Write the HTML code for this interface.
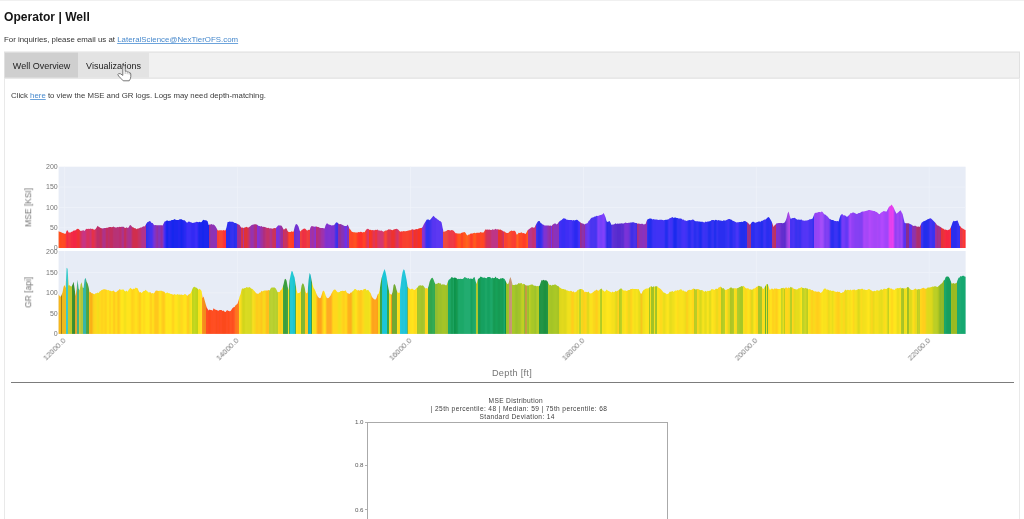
<!DOCTYPE html>
<html><head><meta charset="utf-8"><title>Operator | Well</title>
<style>
html,body{margin:0;padding:0;background:#fff;}
html{width:1024px;height:519px;overflow:hidden;}
body{width:1024px;height:519px;overflow:hidden;position:relative;font-family:"Liberation Sans",sans-serif;color:#222;}
.topline{position:absolute;left:0;top:0;width:1024px;height:1px;background:#f0f0f0;}
h1{position:absolute;left:4px;top:10px;margin:0;font-size:12.1px;line-height:14px;font-weight:bold;color:#151515;white-space:nowrap;}
.inq{position:absolute;left:4px;top:34.7px;font-size:7.87px;line-height:10px;color:#333;white-space:nowrap;}
a{color:#4688cc;text-decoration:underline;text-decoration-thickness:0.7px;text-decoration-color:#6da4dc;text-underline-offset:1px;}
.inq a{letter-spacing:0.02px;}
.tabbar{position:absolute;left:4px;top:52px;width:1016px;height:27px;background:#f1f1f1;border:1px solid #e0e0e0;box-sizing:border-box;transform:translateY(-0.4px);}
.tab{position:absolute;top:0;height:25px;font-size:9px;line-height:27px;color:#222;text-align:center;white-space:nowrap;}
.tab.t1{left:0;width:73px;background:#cfcfcf;}
.tab.t2{left:73px;width:71px;background:#e3e3e3;}
.panel{position:absolute;left:4px;top:78px;width:1016px;height:441px;border:1px solid #e9e9e9;border-top:none;border-bottom:none;box-sizing:border-box;}
.click{position:absolute;left:11px;top:91px;font-size:7.82px;line-height:10px;color:#3a3a3a;white-space:nowrap;}
.chart{position:absolute;left:0;top:0;font-family:"Liberation Sans",sans-serif;}
.hr{position:absolute;left:11px;top:381.6px;width:1003px;height:1.2px;background:#7c7c7c;}
.mt{position:absolute;left:317px;width:400px;text-align:center;font-size:6.6px;line-height:8px;color:#404040;white-space:nowrap;letter-spacing:0.25px;}
.box{position:absolute;left:367px;top:422px;width:301px;height:97px;border:1px solid #aaaaaa;border-bottom:none;box-sizing:border-box;}
.yt{position:absolute;left:340px;width:23.2px;text-align:right;font-size:6.2px;line-height:6px;color:#585858;letter-spacing:-0.15px;}
.tick{position:absolute;left:365px;width:2px;height:1px;background:#b0b0b0;}
h1,.inq,.tab,.click,.mt,.yt,.chart text{filter:blur(0.35px);}
.cursor{position:absolute;left:116.2px;top:65.2px;filter:blur(0.3px);}
</style></head><body>
<div class="topline"></div>
<h1>Operator | Well</h1>
<div class="inq">For inquiries, please email us at <a>LateralScience@NexTierOFS.com</a></div>
<div class="tabbar"><div class="tab t1">Well Overview</div><div class="tab t2">Visualizations</div></div>
<div class="panel"></div>
<div class="click">Click <a>here</a> to view the MSE and GR logs. Logs may need depth-matching.</div>
<svg class="chart" width="1024" height="400" viewBox="0 0 1024 400">
<defs><filter id="bl"><feGaussianBlur stdDeviation="0.45"/></filter></defs>
<g filter="url(#bl)">
<rect x="58.6" y="166.7" width="907.0" height="81.4" fill="#e7ecf6"/>
<line x1="58.6" x2="965.6" y1="227.8" y2="227.8" stroke="#eff3f9" stroke-width="0.75"/>
<line x1="58.6" x2="965.6" y1="207.4" y2="207.4" stroke="#eff3f9" stroke-width="0.75"/>
<line x1="58.6" x2="965.6" y1="187.1" y2="187.1" stroke="#eff3f9" stroke-width="0.75"/>
<line x1="64.7" x2="64.7" y1="166.7" y2="248.1" stroke="#eff3f9" stroke-width="0.75"/>
<line x1="237.6" x2="237.6" y1="166.7" y2="248.1" stroke="#eff3f9" stroke-width="0.75"/>
<line x1="410.5" x2="410.5" y1="166.7" y2="248.1" stroke="#eff3f9" stroke-width="0.75"/>
<line x1="583.4" x2="583.4" y1="166.7" y2="248.1" stroke="#eff3f9" stroke-width="0.75"/>
<line x1="756.3" x2="756.3" y1="166.7" y2="248.1" stroke="#eff3f9" stroke-width="0.75"/>
<line x1="929.2" x2="929.2" y1="166.7" y2="248.1" stroke="#eff3f9" stroke-width="0.75"/>
<rect x="58.6" y="251.0" width="907.0" height="82.9" fill="#e7ecf6"/>
<line x1="58.6" x2="965.6" y1="313.4" y2="313.4" stroke="#eff3f9" stroke-width="0.75"/>
<line x1="58.6" x2="965.6" y1="292.9" y2="292.9" stroke="#eff3f9" stroke-width="0.75"/>
<line x1="58.6" x2="965.6" y1="272.4" y2="272.4" stroke="#eff3f9" stroke-width="0.75"/>
<line x1="64.7" x2="64.7" y1="251.0" y2="333.9" stroke="#eff3f9" stroke-width="0.75"/>
<line x1="237.6" x2="237.6" y1="251.0" y2="333.9" stroke="#eff3f9" stroke-width="0.75"/>
<line x1="410.5" x2="410.5" y1="251.0" y2="333.9" stroke="#eff3f9" stroke-width="0.75"/>
<line x1="583.4" x2="583.4" y1="251.0" y2="333.9" stroke="#eff3f9" stroke-width="0.75"/>
<line x1="756.3" x2="756.3" y1="251.0" y2="333.9" stroke="#eff3f9" stroke-width="0.75"/>
<line x1="929.2" x2="929.2" y1="251.0" y2="333.9" stroke="#eff3f9" stroke-width="0.75"/>
<clipPath id="cm"><polygon points="58.6,248.1 58.6,231.2 59.6,231.7 60.6,231.9 61.6,232.5 62.6,233.0 63.6,233.2 64.6,233.8 65.6,233.8 66.6,230.8 67.6,230.2 68.6,232.4 69.6,232.4 70.6,232.4 71.6,231.8 72.6,231.5 73.6,230.5 74.6,230.5 75.6,230.2 76.6,229.2 77.6,228.8 78.6,228.9 79.6,230.0 80.6,230.9 81.6,230.8 82.6,230.5 83.6,230.3 84.6,231.0 85.6,229.6 86.6,228.8 87.6,228.9 88.6,228.8 89.6,229.0 90.6,228.6 91.6,229.0 92.6,228.7 93.6,229.5 94.6,229.8 95.6,229.1 96.6,227.4 97.6,225.8 98.6,226.8 99.6,227.2 100.6,228.1 101.6,228.3 102.6,228.4 103.6,228.2 104.6,228.1 105.6,228.1 106.6,227.8 107.6,227.7 108.6,227.2 109.6,227.1 110.6,226.9 111.6,227.2 112.6,227.0 113.6,226.6 114.6,227.3 115.6,227.5 116.6,227.5 117.6,227.1 118.6,227.2 119.6,226.7 120.6,227.1 121.6,226.8 122.6,226.8 123.6,226.8 124.6,227.8 125.6,228.1 126.6,227.3 127.6,227.9 128.6,227.5 129.6,225.5 130.6,225.0 131.6,226.3 132.6,227.3 133.6,227.4 134.6,228.3 135.6,228.3 136.6,229.2 137.6,228.4 138.6,228.4 139.6,228.1 140.6,227.4 141.6,227.6 142.6,226.7 143.6,226.2 144.6,226.4 145.6,225.0 146.6,223.2 147.6,222.0 148.6,221.8 149.6,221.0 150.6,221.6 151.6,222.9 152.6,223.1 153.6,224.5 154.6,225.2 155.6,225.1 156.6,225.2 157.6,225.2 158.6,225.3 159.6,225.3 160.6,225.3 161.6,225.3 162.6,225.6 163.6,223.6 164.6,221.6 165.6,221.2 166.6,220.5 167.6,220.5 168.6,221.1 169.6,220.7 170.6,220.8 171.6,219.9 172.6,219.9 173.6,219.7 174.6,218.9 175.6,219.8 176.6,220.1 177.6,219.9 178.6,219.9 179.6,219.3 180.6,219.2 181.6,219.2 182.6,219.9 183.6,220.3 184.6,220.2 185.6,221.2 186.6,222.4 187.6,222.4 188.6,221.6 189.6,221.8 190.6,222.3 191.6,222.5 192.6,222.9 193.6,222.8 194.6,222.4 195.6,222.2 196.6,221.8 197.6,221.9 198.6,222.3 199.6,221.8 200.6,222.3 201.6,221.9 202.6,220.6 203.6,219.7 204.6,220.3 205.6,220.2 206.6,220.6 207.6,221.2 208.6,224.9 209.6,224.6 210.6,224.4 211.6,224.1 212.6,224.7 213.6,224.6 214.6,225.2 215.6,226.4 216.6,228.3 217.6,230.2 218.6,230.6 219.6,230.3 220.6,230.2 221.6,230.2 222.6,230.6 223.6,230.1 224.6,230.4 225.6,230.2 226.6,227.1 227.6,221.9 228.6,222.0 229.6,221.5 230.6,221.8 231.6,221.7 232.6,221.8 233.6,222.3 234.6,223.1 235.6,223.0 236.6,223.5 237.6,224.0 238.6,224.5 239.6,225.0 240.6,226.8 241.6,227.7 242.6,227.4 243.6,227.9 244.6,227.5 245.6,227.2 246.6,226.8 247.6,227.4 248.6,227.4 249.6,226.8 250.6,226.1 251.6,225.1 252.6,224.8 253.6,224.5 254.6,224.2 255.6,224.2 256.6,224.6 257.6,225.0 258.6,225.9 259.6,226.0 260.6,226.6 261.6,226.0 262.6,226.9 263.6,226.8 264.6,227.1 265.6,227.3 266.6,227.8 267.6,228.0 268.6,227.8 269.6,228.6 270.6,228.2 271.6,228.5 272.6,228.7 273.6,228.3 274.6,228.0 275.6,228.2 276.6,227.2 277.6,226.1 278.6,225.2 279.6,225.6 280.6,225.4 281.6,225.8 282.6,227.4 283.6,229.6 284.6,229.2 285.6,228.3 286.6,228.4 287.6,231.0 288.6,232.0 289.6,231.9 290.6,231.9 291.6,231.2 292.6,231.8 293.6,231.5 294.6,227.3 295.6,224.5 296.6,223.9 297.6,225.0 298.6,226.8 299.6,230.4 300.6,231.4 301.6,230.1 302.6,229.4 303.6,228.8 304.6,228.6 305.6,229.0 306.6,230.2 307.6,230.4 308.6,229.7 309.6,230.1 310.6,227.3 311.6,226.1 312.6,226.2 313.6,226.6 314.6,226.7 315.6,226.6 316.6,226.6 317.6,227.0 318.6,227.1 319.6,227.7 320.6,228.0 321.6,228.0 322.6,227.9 323.6,228.2 324.6,228.6 325.6,225.3 326.6,223.6 327.6,223.5 328.6,224.4 329.6,224.7 330.6,225.1 331.6,225.5 332.6,225.3 333.6,225.2 334.6,224.5 335.6,222.9 336.6,222.3 337.6,222.8 338.6,223.7 339.6,224.2 340.6,224.0 341.6,224.6 342.6,224.9 343.6,225.6 344.6,226.0 345.6,225.9 346.6,226.0 347.6,224.5 348.6,226.6 349.6,229.1 350.6,229.8 351.6,231.5 352.6,231.9 353.6,232.2 354.6,232.3 355.6,232.4 356.6,232.6 357.6,232.4 358.6,231.9 359.6,232.2 360.6,231.7 361.6,231.9 362.6,232.6 363.6,232.1 364.6,232.2 365.6,230.6 366.6,229.3 367.6,228.7 368.6,229.0 369.6,230.0 370.6,229.7 371.6,230.3 372.6,230.1 373.6,230.2 374.6,230.2 375.6,229.8 376.6,230.0 377.6,229.5 378.6,230.4 379.6,230.4 380.6,230.8 381.6,230.5 382.6,231.3 383.6,231.7 384.6,230.9 385.6,230.6 386.6,230.4 387.6,230.1 388.6,229.3 389.6,229.4 390.6,229.6 391.6,230.1 392.6,230.2 393.6,229.6 394.6,229.3 395.6,229.0 396.6,228.7 397.6,229.2 398.6,229.9 399.6,231.2 400.6,231.8 401.6,231.3 402.6,231.5 403.6,230.9 404.6,231.3 405.6,231.3 406.6,231.0 407.6,230.7 408.6,230.4 409.6,230.3 410.6,230.3 411.6,229.4 412.6,229.2 413.6,229.7 414.6,229.8 415.6,229.3 416.6,229.1 417.6,229.3 418.6,228.5 419.6,228.2 420.6,227.9 421.6,227.9 422.6,226.9 423.6,224.7 424.6,223.0 425.6,221.4 426.6,219.8 427.6,219.6 428.6,219.6 429.6,220.2 430.6,219.3 431.6,217.9 432.6,216.8 433.6,215.7 434.6,217.1 435.6,218.0 436.6,218.6 437.6,219.4 438.6,220.0 439.6,221.1 440.6,221.2 441.6,222.6 442.6,227.8 443.6,232.0 444.6,231.4 445.6,231.3 446.6,230.8 447.6,230.1 448.6,230.1 449.6,230.3 450.6,230.4 451.6,230.0 452.6,230.3 453.6,230.8 454.6,232.1 455.6,233.3 456.6,233.2 457.6,233.6 458.6,233.4 459.6,233.6 460.6,233.4 461.6,232.7 462.6,232.4 463.6,232.2 464.6,231.9 465.6,233.0 466.6,234.8 467.6,235.5 468.6,234.5 469.6,234.6 470.6,233.6 471.6,233.5 472.6,233.6 473.6,232.9 474.6,232.8 475.6,233.3 476.6,232.7 477.6,232.7 478.6,232.7 479.6,232.7 480.6,232.1 481.6,232.4 482.6,232.4 483.6,232.4 484.6,230.7 485.6,229.3 486.6,229.7 487.6,229.4 488.6,229.7 489.6,229.6 490.6,229.9 491.6,230.0 492.6,229.2 493.6,229.7 494.6,229.5 495.6,228.8 496.6,229.6 497.6,229.2 498.6,229.6 499.6,229.7 500.6,229.5 501.6,230.3 502.6,230.8 503.6,231.5 504.6,231.5 505.6,232.4 506.6,232.9 507.6,233.0 508.6,232.7 509.6,231.5 510.6,231.0 511.6,230.5 512.6,230.9 513.6,230.8 514.6,230.7 515.6,231.8 516.6,234.4 517.6,234.3 518.6,232.7 519.6,233.0 520.6,232.8 521.6,232.3 522.6,233.3 523.6,232.9 524.6,233.5 525.6,234.1 526.6,232.3 527.6,230.2 528.6,229.6 529.6,228.8 530.6,228.0 531.6,227.3 532.6,227.2 533.6,227.7 534.6,227.5 535.6,225.3 536.6,223.4 537.6,221.8 538.6,221.0 539.6,220.9 540.6,222.9 541.6,223.6 542.6,224.6 543.6,224.7 544.6,225.6 545.6,225.5 546.6,225.4 547.6,225.5 548.6,225.6 549.6,225.8 550.6,225.5 551.6,225.9 552.6,224.7 553.6,223.9 554.6,223.4 555.6,223.6 556.6,224.4 557.6,223.8 558.6,222.3 559.6,221.3 560.6,220.5 561.6,219.9 562.6,219.1 563.6,218.2 564.6,218.5 565.6,218.8 566.6,219.8 567.6,219.7 568.6,220.0 569.6,220.1 570.6,219.9 571.6,220.0 572.6,220.5 573.6,219.9 574.6,220.6 575.6,220.1 576.6,219.8 577.6,220.1 578.6,221.0 579.6,221.8 580.6,222.5 581.6,223.3 582.6,223.5 583.6,223.7 584.6,224.4 585.6,223.8 586.6,223.5 587.6,222.9 588.6,221.0 589.6,220.3 590.6,218.8 591.6,217.8 592.6,217.5 593.6,217.2 594.6,216.6 595.6,216.6 596.6,215.8 597.6,215.9 598.6,215.7 599.6,215.2 600.6,215.0 601.6,214.8 602.6,214.2 603.6,212.9 604.6,214.9 605.6,217.6 606.6,221.2 607.6,221.9 608.6,221.4 609.6,221.0 610.6,223.0 611.6,225.1 612.6,224.4 613.6,224.6 614.6,224.1 615.6,223.3 616.6,223.9 617.6,223.6 618.6,223.8 619.6,223.6 620.6,223.6 621.6,223.2 622.6,223.5 623.6,223.4 624.6,223.1 625.6,222.6 626.6,223.1 627.6,222.9 628.6,222.7 629.6,222.8 630.6,222.4 631.6,222.4 632.6,222.2 633.6,222.3 634.6,222.7 635.6,222.9 636.6,223.1 637.6,223.7 638.6,223.5 639.6,223.7 640.6,224.1 641.6,223.8 642.6,223.7 643.6,224.4 644.6,224.3 645.6,224.1 646.6,221.1 647.6,219.3 648.6,219.1 649.6,218.5 650.6,218.5 651.6,218.8 652.6,219.5 653.6,219.1 654.6,219.5 655.6,219.4 656.6,219.6 657.6,219.7 658.6,219.9 659.6,219.7 660.6,219.7 661.6,219.8 662.6,219.9 663.6,220.2 664.6,219.9 665.6,219.7 666.6,219.8 667.6,219.4 668.6,219.3 669.6,218.3 670.6,218.0 671.6,217.5 672.6,217.1 673.6,218.0 674.6,217.5 675.6,217.6 676.6,218.1 677.6,218.0 678.6,218.6 679.6,218.6 680.6,218.6 681.6,218.8 682.6,219.7 683.6,219.6 684.6,220.4 685.6,220.4 686.6,221.1 687.6,220.4 688.6,220.2 689.6,220.0 690.6,220.3 691.6,220.0 692.6,219.6 693.6,219.8 694.6,220.7 695.6,221.3 696.6,221.3 697.6,221.2 698.6,221.5 699.6,221.6 700.6,221.8 701.6,221.7 702.6,221.8 703.6,222.3 704.6,222.4 705.6,221.5 706.6,222.0 707.6,221.4 708.6,221.5 709.6,221.3 710.6,221.1 711.6,220.1 712.6,220.1 713.6,220.1 714.6,220.4 715.6,219.7 716.6,220.0 717.6,220.6 718.6,220.1 719.6,220.4 720.6,220.4 721.6,220.8 722.6,221.0 723.6,220.2 724.6,220.6 725.6,220.5 726.6,220.1 727.6,219.4 728.6,219.1 729.6,219.0 730.6,219.5 731.6,219.7 732.6,220.8 733.6,221.1 734.6,221.5 735.6,222.0 736.6,222.4 737.6,222.3 738.6,222.3 739.6,222.0 740.6,222.0 741.6,221.7 742.6,222.1 743.6,221.3 744.6,221.1 745.6,221.3 746.6,222.0 747.6,222.4 748.6,223.4 749.6,224.7 750.6,224.1 751.6,222.5 752.6,221.8 753.6,221.8 754.6,222.5 755.6,222.7 756.6,222.3 757.6,222.1 758.6,221.6 759.6,221.6 760.6,221.8 761.6,220.7 762.6,220.7 763.6,219.9 764.6,219.4 765.6,219.5 766.6,218.5 767.6,217.6 768.6,217.0 769.6,218.0 770.6,219.7 771.6,221.4 772.6,224.1 773.6,227.1 774.6,225.3 775.6,224.4 776.6,223.2 777.6,223.3 778.6,223.1 779.6,223.1 780.6,223.1 781.6,223.0 782.6,223.2 783.6,223.0 784.6,222.5 785.6,220.7 786.6,218.1 787.6,213.6 788.6,211.5 789.6,215.2 790.6,218.8 791.6,218.6 792.6,217.9 793.6,217.9 794.6,217.8 795.6,218.5 796.6,219.3 797.6,219.7 798.6,219.4 799.6,219.7 800.6,219.7 801.6,219.6 802.6,220.4 803.6,220.4 804.6,220.8 805.6,220.4 806.6,220.5 807.6,220.2 808.6,220.1 809.6,219.2 810.6,219.2 811.6,219.0 812.6,218.4 813.6,216.0 814.6,213.3 815.6,212.8 816.6,212.8 817.6,212.6 818.6,212.0 819.6,212.0 820.6,212.3 821.6,211.5 822.6,211.9 823.6,213.5 824.6,214.4 825.6,214.7 826.6,215.7 827.6,216.4 828.6,217.8 829.6,219.1 830.6,219.3 831.6,219.9 832.6,219.9 833.6,220.2 834.6,220.9 835.6,221.0 836.6,221.3 837.6,221.1 838.6,221.5 839.6,218.0 840.6,215.2 841.6,214.2 842.6,214.3 843.6,215.5 844.6,215.3 845.6,215.7 846.6,216.8 847.6,216.6 848.6,215.6 849.6,214.5 850.6,213.0 851.6,213.3 852.6,212.5 853.6,212.6 854.6,212.9 855.6,213.6 856.6,214.0 857.6,213.7 858.6,213.1 859.6,212.9 860.6,212.5 861.6,211.8 862.6,211.4 863.6,211.6 864.6,211.2 865.6,211.1 866.6,210.8 867.6,210.4 868.6,210.0 869.6,209.9 870.6,210.2 871.6,210.5 872.6,210.8 873.6,211.0 874.6,211.1 875.6,211.8 876.6,211.9 877.6,212.7 878.6,213.7 879.6,214.3 880.6,213.1 881.6,212.2 882.6,211.8 883.6,211.1 884.6,211.2 885.6,211.6 886.6,211.4 887.6,209.4 888.6,207.6 889.6,206.2 890.6,205.8 891.6,204.6 892.6,205.9 893.6,207.5 894.6,209.9 895.6,212.1 896.6,213.8 897.6,212.7 898.6,212.1 899.6,211.1 900.6,210.3 901.6,212.3 902.6,213.9 903.6,218.5 904.6,222.7 905.6,223.3 906.6,223.2 907.6,223.2 908.6,223.2 909.6,223.7 910.6,224.3 911.6,224.8 912.6,225.5 913.6,225.9 914.6,225.7 915.6,225.8 916.6,226.5 917.6,226.7 918.6,226.6 919.6,227.0 920.6,225.0 921.6,222.8 922.6,222.0 923.6,221.2 924.6,221.1 925.6,220.6 926.6,220.1 927.6,219.2 928.6,218.9 929.6,218.6 930.6,218.2 931.6,219.0 932.6,219.9 933.6,221.0 934.6,221.9 935.6,223.1 936.6,224.6 937.6,225.5 938.6,225.8 939.6,226.4 940.6,227.0 941.6,227.7 942.6,228.5 943.6,228.7 944.6,229.7 945.6,229.4 946.6,230.1 947.6,230.2 948.6,229.7 949.6,229.6 950.6,227.7 951.6,225.2 952.6,222.2 953.6,220.8 954.6,221.2 955.6,221.0 956.6,220.8 957.6,220.5 958.6,223.2 959.6,226.1 960.6,226.6 961.6,227.9 962.6,228.5 963.6,229.0 964.6,229.7 965.6,230.1 965.6,248.1"/></clipPath>
<g clip-path="url(#cm)"><rect x="58" y="164.7" width="1" height="83.4" fill="#ff541d"/><rect x="59" y="164.7" width="1" height="83.4" fill="#ff511e"/><rect x="60" y="164.7" width="1" height="83.4" fill="#ff4c1f"/><rect x="61" y="164.7" width="1" height="83.4" fill="#ff4920"/><rect x="62" y="164.7" width="1" height="83.4" fill="#ff4b20"/><rect x="63" y="164.7" width="1" height="83.4" fill="#ff4a20"/><rect x="64" y="164.7" width="1" height="83.4" fill="#ff4821"/><rect x="65" y="164.7" width="1" height="83.4" fill="#fc4329"/><rect x="66" y="164.7" width="1" height="83.4" fill="#f5323c"/><rect x="67" y="164.7" width="1" height="83.4" fill="#f22a45"/><rect x="68" y="164.7" width="1" height="83.4" fill="#f23242"/><rect x="69" y="164.7" width="1" height="83.4" fill="#f23541"/><rect x="70" y="164.7" width="1" height="83.4" fill="#f23242"/><rect x="71" y="164.7" width="1" height="83.4" fill="#f22c44"/><rect x="72" y="164.7" width="1" height="83.4" fill="#f22945"/><rect x="73" y="164.7" width="3" height="83.4" fill="#f22845"/><rect x="76" y="164.7" width="1" height="83.4" fill="#f12b40"/><rect x="77" y="164.7" width="1" height="83.4" fill="#ef2e37"/><rect x="78" y="164.7" width="1" height="83.4" fill="#ee3032"/><rect x="79" y="164.7" width="1" height="83.4" fill="#e8313f"/><rect x="80" y="164.7" width="1" height="83.4" fill="#dc3258"/><rect x="81" y="164.7" width="1" height="83.4" fill="#d2336d"/><rect x="82" y="164.7" width="1" height="83.4" fill="#cb347d"/><rect x="83" y="164.7" width="2" height="83.4" fill="#c73485"/><rect x="85" y="164.7" width="1" height="83.4" fill="#cb347c"/><rect x="86" y="164.7" width="1" height="83.4" fill="#d4326a"/><rect x="87" y="164.7" width="2" height="83.4" fill="#d83261"/><rect x="89" y="164.7" width="1" height="83.4" fill="#d3326b"/><rect x="90" y="164.7" width="1" height="83.4" fill="#cf3374"/><rect x="91" y="164.7" width="1" height="83.4" fill="#d73262"/><rect x="92" y="164.7" width="1" height="83.4" fill="#e3314a"/><rect x="93" y="164.7" width="1" height="83.4" fill="#e33149"/><rect x="94" y="164.7" width="1" height="83.4" fill="#dd3256"/><rect x="95" y="164.7" width="1" height="83.4" fill="#d3315f"/><rect x="96" y="164.7" width="1" height="83.4" fill="#c43066"/><rect x="97" y="164.7" width="2" height="83.4" fill="#bd2f69"/><rect x="99" y="164.7" width="1" height="83.4" fill="#c02f64"/><rect x="100" y="164.7" width="1" height="83.4" fill="#c42e59"/><rect x="101" y="164.7" width="1" height="83.4" fill="#c02f62"/><rect x="102" y="164.7" width="1" height="83.4" fill="#b4307c"/><rect x="103" y="164.7" width="2" height="83.4" fill="#ad318a"/><rect x="105" y="164.7" width="1" height="83.4" fill="#b4307c"/><rect x="106" y="164.7" width="1" height="83.4" fill="#c02f62"/><rect x="107" y="164.7" width="1" height="83.4" fill="#c22e60"/><rect x="108" y="164.7" width="1" height="83.4" fill="#bb2f6e"/><rect x="109" y="164.7" width="1" height="83.4" fill="#be2f68"/><rect x="110" y="164.7" width="2" height="83.4" fill="#c22f5f"/><rect x="112" y="164.7" width="1" height="83.4" fill="#bf2f64"/><rect x="113" y="164.7" width="1" height="83.4" fill="#ba3070"/><rect x="114" y="164.7" width="2" height="83.4" fill="#b73075"/><rect x="116" y="164.7" width="1" height="83.4" fill="#b73076"/><rect x="117" y="164.7" width="1" height="83.4" fill="#b63078"/><rect x="118" y="164.7" width="1" height="83.4" fill="#b73076"/><rect x="119" y="164.7" width="1" height="83.4" fill="#ba2f71"/><rect x="120" y="164.7" width="1" height="83.4" fill="#bb2f6e"/><rect x="121" y="164.7" width="1" height="83.4" fill="#b63079"/><rect x="122" y="164.7" width="1" height="83.4" fill="#ab308e"/><rect x="123" y="164.7" width="1" height="83.4" fill="#ae3087"/><rect x="124" y="164.7" width="1" height="83.4" fill="#c02f64"/><rect x="125" y="164.7" width="1" height="83.4" fill="#c32e5d"/><rect x="126" y="164.7" width="1" height="83.4" fill="#b83074"/><rect x="127" y="164.7" width="1" height="83.4" fill="#b03084"/><rect x="128" y="164.7" width="1" height="83.4" fill="#ac318e"/><rect x="129" y="164.7" width="1" height="83.4" fill="#aa3190"/><rect x="130" y="164.7" width="1" height="83.4" fill="#ae308a"/><rect x="131" y="164.7" width="1" height="83.4" fill="#b83078"/><rect x="132" y="164.7" width="1" height="83.4" fill="#c92f5a"/><rect x="133" y="164.7" width="1" height="83.4" fill="#d02f4d"/><rect x="134" y="164.7" width="2" height="83.4" fill="#d02f4e"/><rect x="136" y="164.7" width="1" height="83.4" fill="#d12f4d"/><rect x="137" y="164.7" width="1" height="83.4" fill="#ce2f54"/><rect x="138" y="164.7" width="1" height="83.4" fill="#c73061"/><rect x="139" y="164.7" width="1" height="83.4" fill="#c43068"/><rect x="140" y="164.7" width="1" height="83.4" fill="#c03070"/><rect x="141" y="164.7" width="1" height="83.4" fill="#b73182"/><rect x="142" y="164.7" width="1" height="83.4" fill="#b2318c"/><rect x="143" y="164.7" width="3" height="83.4" fill="#b2318d"/><rect x="146" y="164.7" width="1" height="83.4" fill="#332fec"/><rect x="147" y="164.7" width="1" height="83.4" fill="#3630ed"/><rect x="148" y="164.7" width="1" height="83.4" fill="#3b30ee"/><rect x="149" y="164.7" width="1" height="83.4" fill="#4031f0"/><rect x="150" y="164.7" width="1" height="83.4" fill="#4532f0"/><rect x="151" y="164.7" width="1" height="83.4" fill="#4732f1"/><rect x="152" y="164.7" width="1" height="83.4" fill="#5432ea"/><rect x="153" y="164.7" width="1" height="83.4" fill="#6d31de"/><rect x="154" y="164.7" width="1" height="83.4" fill="#7d31d0"/><rect x="155" y="164.7" width="1" height="83.4" fill="#8530be"/><rect x="156" y="164.7" width="1" height="83.4" fill="#8e30ab"/><rect x="157" y="164.7" width="1" height="83.4" fill="#912fa5"/><rect x="158" y="164.7" width="1" height="83.4" fill="#8830b8"/><rect x="159" y="164.7" width="1" height="83.4" fill="#8530be"/><rect x="160" y="164.7" width="1" height="83.4" fill="#8e30ab"/><rect x="161" y="164.7" width="1" height="83.4" fill="#922fa2"/><rect x="162" y="164.7" width="1" height="83.4" fill="#8b30b1"/><rect x="163" y="164.7" width="1" height="83.4" fill="#6e30d6"/><rect x="164" y="164.7" width="1" height="83.4" fill="#4a2ef0"/><rect x="165" y="164.7" width="1" height="83.4" fill="#322bf4"/><rect x="166" y="164.7" width="1" height="83.4" fill="#1e28ef"/><rect x="167" y="164.7" width="1" height="83.4" fill="#1927ee"/><rect x="168" y="164.7" width="1" height="83.4" fill="#2028f0"/><rect x="169" y="164.7" width="1" height="83.4" fill="#2429f1"/><rect x="170" y="164.7" width="1" height="83.4" fill="#2128f0"/><rect x="171" y="164.7" width="1" height="83.4" fill="#1c28ef"/><rect x="172" y="164.7" width="2" height="83.4" fill="#1927ee"/><rect x="174" y="164.7" width="1" height="83.4" fill="#1a27ee"/><rect x="175" y="164.7" width="1" height="83.4" fill="#1c28ee"/><rect x="176" y="164.7" width="1" height="83.4" fill="#1b27ee"/><rect x="177" y="164.7" width="1" height="83.4" fill="#1d28ef"/><rect x="178" y="164.7" width="1" height="83.4" fill="#2328f0"/><rect x="179" y="164.7" width="1" height="83.4" fill="#2228f0"/><rect x="180" y="164.7" width="1" height="83.4" fill="#1c28ef"/><rect x="181" y="164.7" width="1" height="83.4" fill="#1827ee"/><rect x="182" y="164.7" width="1" height="83.4" fill="#1c28ef"/><rect x="183" y="164.7" width="1" height="83.4" fill="#2228f0"/><rect x="184" y="164.7" width="1" height="83.4" fill="#2629f1"/><rect x="185" y="164.7" width="1" height="83.4" fill="#2b2af2"/><rect x="186" y="164.7" width="1" height="83.4" fill="#362cf5"/><rect x="187" y="164.7" width="1" height="83.4" fill="#3b2df6"/><rect x="188" y="164.7" width="2" height="83.4" fill="#3a2df6"/><rect x="190" y="164.7" width="1" height="83.4" fill="#382df6"/><rect x="191" y="164.7" width="1" height="83.4" fill="#352cf4"/><rect x="192" y="164.7" width="1" height="83.4" fill="#332cf4"/><rect x="193" y="164.7" width="1" height="83.4" fill="#322bf4"/><rect x="194" y="164.7" width="1" height="83.4" fill="#352cf5"/><rect x="195" y="164.7" width="1" height="83.4" fill="#3b2df6"/><rect x="196" y="164.7" width="1" height="83.4" fill="#3e2ef7"/><rect x="197" y="164.7" width="1" height="83.4" fill="#342cf5"/><rect x="198" y="164.7" width="1" height="83.4" fill="#2229f0"/><rect x="199" y="164.7" width="1" height="83.4" fill="#1a27ee"/><rect x="200" y="164.7" width="1" height="83.4" fill="#1c28ef"/><rect x="201" y="164.7" width="1" height="83.4" fill="#1c28ee"/><rect x="202" y="164.7" width="2" height="83.4" fill="#1726ee"/><rect x="204" y="164.7" width="1" height="83.4" fill="#1a27ee"/><rect x="205" y="164.7" width="2" height="83.4" fill="#1c27ef"/><rect x="207" y="164.7" width="1" height="83.4" fill="#1a27ee"/><rect x="208" y="164.7" width="1" height="83.4" fill="#1726ee"/><rect x="209" y="164.7" width="1" height="83.4" fill="#9f2f90"/><rect x="210" y="164.7" width="1" height="83.4" fill="#9430a6"/><rect x="211" y="164.7" width="1" height="83.4" fill="#8e30b3"/><rect x="212" y="164.7" width="1" height="83.4" fill="#8e30b4"/><rect x="213" y="164.7" width="1" height="83.4" fill="#8d30b6"/><rect x="214" y="164.7" width="3" height="83.4" fill="#8d30b7"/><rect x="217" y="164.7" width="1" height="83.4" fill="#fb3d34"/><rect x="218" y="164.7" width="1" height="83.4" fill="#fb3f33"/><rect x="219" y="164.7" width="1" height="83.4" fill="#fb4432"/><rect x="220" y="164.7" width="2" height="83.4" fill="#fb4631"/><rect x="222" y="164.7" width="1" height="83.4" fill="#fb4232"/><rect x="223" y="164.7" width="1" height="83.4" fill="#fb3836"/><rect x="224" y="164.7" width="2" height="83.4" fill="#fb3237"/><rect x="226" y="164.7" width="4" height="83.4" fill="#2b2fef"/><rect x="230" y="164.7" width="1" height="83.4" fill="#2e30f0"/><rect x="231" y="164.7" width="1" height="83.4" fill="#3330f0"/><rect x="232" y="164.7" width="1" height="83.4" fill="#3631f1"/><rect x="233" y="164.7" width="1" height="83.4" fill="#3130f0"/><rect x="234" y="164.7" width="1" height="83.4" fill="#2a2fee"/><rect x="235" y="164.7" width="1" height="83.4" fill="#2a30ee"/><rect x="236" y="164.7" width="1" height="83.4" fill="#2d30ef"/><rect x="237" y="164.7" width="1" height="83.4" fill="#982f9c"/><rect x="238" y="164.7" width="1" height="83.4" fill="#9c2e93"/><rect x="239" y="164.7" width="1" height="83.4" fill="#9e2f90"/><rect x="240" y="164.7" width="1" height="83.4" fill="#9d2f91"/><rect x="241" y="164.7" width="2" height="83.4" fill="#d93145"/><rect x="243" y="164.7" width="1" height="83.4" fill="#b23495"/><rect x="244" y="164.7" width="3" height="83.4" fill="#df3039"/><rect x="247" y="164.7" width="1" height="83.4" fill="#d83048"/><rect x="248" y="164.7" width="1" height="83.4" fill="#ca3264"/><rect x="249" y="164.7" width="1" height="83.4" fill="#b83282"/><rect x="250" y="164.7" width="1" height="83.4" fill="#a131a2"/><rect x="251" y="164.7" width="1" height="83.4" fill="#9631b0"/><rect x="252" y="164.7" width="1" height="83.4" fill="#9730af"/><rect x="253" y="164.7" width="1" height="83.4" fill="#9d30a2"/><rect x="254" y="164.7" width="1" height="83.4" fill="#a82e8a"/><rect x="255" y="164.7" width="2" height="83.4" fill="#ae2e7e"/><rect x="257" y="164.7" width="2" height="83.4" fill="#8432d5"/><rect x="259" y="164.7" width="1" height="83.4" fill="#8a32c8"/><rect x="260" y="164.7" width="1" height="83.4" fill="#9730af"/><rect x="261" y="164.7" width="1" height="83.4" fill="#9d30a2"/><rect x="262" y="164.7" width="1" height="83.4" fill="#a23098"/><rect x="263" y="164.7" width="1" height="83.4" fill="#ab2e85"/><rect x="264" y="164.7" width="1" height="83.4" fill="#b22f7c"/><rect x="265" y="164.7" width="1" height="83.4" fill="#b93279"/><rect x="266" y="164.7" width="1" height="83.4" fill="#c2326d"/><rect x="267" y="164.7" width="1" height="83.4" fill="#c43267"/><rect x="268" y="164.7" width="1" height="83.4" fill="#c43269"/><rect x="269" y="164.7" width="1" height="83.4" fill="#be3275"/><rect x="270" y="164.7" width="1" height="83.4" fill="#b3348a"/><rect x="271" y="164.7" width="1" height="83.4" fill="#b53386"/><rect x="272" y="164.7" width="1" height="83.4" fill="#c43269"/><rect x="273" y="164.7" width="3" height="83.4" fill="#cb315a"/><rect x="276" y="164.7" width="3" height="83.4" fill="#7c32d9"/><rect x="279" y="164.7" width="1" height="83.4" fill="#8431ca"/><rect x="280" y="164.7" width="1" height="83.4" fill="#9230ab"/><rect x="281" y="164.7" width="2" height="83.4" fill="#9a2f9c"/><rect x="283" y="164.7" width="1" height="83.4" fill="#cc3059"/><rect x="284" y="164.7" width="1" height="83.4" fill="#c63066"/><rect x="285" y="164.7" width="1" height="83.4" fill="#c53066"/><rect x="286" y="164.7" width="1" height="83.4" fill="#c9305e"/><rect x="287" y="164.7" width="1" height="83.4" fill="#d9334c"/><rect x="288" y="164.7" width="1" height="83.4" fill="#f33c32"/><rect x="289" y="164.7" width="1" height="83.4" fill="#ff4426"/><rect x="290" y="164.7" width="1" height="83.4" fill="#ff4326"/><rect x="291" y="164.7" width="1" height="83.4" fill="#ff4028"/><rect x="292" y="164.7" width="2" height="83.4" fill="#ff3e28"/><rect x="294" y="164.7" width="1" height="83.4" fill="#6730cf"/><rect x="295" y="164.7" width="1" height="83.4" fill="#6c30d0"/><rect x="296" y="164.7" width="1" height="83.4" fill="#7131d2"/><rect x="297" y="164.7" width="1" height="83.4" fill="#7532d2"/><rect x="298" y="164.7" width="1" height="83.4" fill="#7632d3"/><rect x="299" y="164.7" width="1" height="83.4" fill="#7632d2"/><rect x="300" y="164.7" width="1" height="83.4" fill="#ee413d"/><rect x="301" y="164.7" width="1" height="83.4" fill="#ee3c3f"/><rect x="302" y="164.7" width="1" height="83.4" fill="#ee3242"/><rect x="303" y="164.7" width="1" height="83.4" fill="#ee2e44"/><rect x="304" y="164.7" width="1" height="83.4" fill="#ee3242"/><rect x="305" y="164.7" width="1" height="83.4" fill="#ee3342"/><rect x="306" y="164.7" width="1" height="83.4" fill="#ee3940"/><rect x="307" y="164.7" width="1" height="83.4" fill="#ee403e"/><rect x="308" y="164.7" width="1" height="83.4" fill="#ee3c3e"/><rect x="309" y="164.7" width="1" height="83.4" fill="#ee3740"/><rect x="310" y="164.7" width="1" height="83.4" fill="#9b31b3"/><rect x="311" y="164.7" width="1" height="83.4" fill="#9e31ad"/><rect x="312" y="164.7" width="1" height="83.4" fill="#a430a1"/><rect x="313" y="164.7" width="1" height="83.4" fill="#a130a8"/><rect x="314" y="164.7" width="1" height="83.4" fill="#9432c1"/><rect x="315" y="164.7" width="1" height="83.4" fill="#8e32ce"/><rect x="316" y="164.7" width="1" height="83.4" fill="#b82e76"/><rect x="317" y="164.7" width="1" height="83.4" fill="#b62e7a"/><rect x="318" y="164.7" width="1" height="83.4" fill="#b22f84"/><rect x="319" y="164.7" width="1" height="83.4" fill="#ad2f8d"/><rect x="320" y="164.7" width="1" height="83.4" fill="#a82f97"/><rect x="321" y="164.7" width="1" height="83.4" fill="#a230a5"/><rect x="322" y="164.7" width="1" height="83.4" fill="#9e30ac"/><rect x="323" y="164.7" width="1" height="83.4" fill="#9c30b2"/><rect x="324" y="164.7" width="1" height="83.4" fill="#9131c0"/><rect x="325" y="164.7" width="1" height="83.4" fill="#8432cc"/><rect x="326" y="164.7" width="1" height="83.4" fill="#7f33cf"/><rect x="327" y="164.7" width="1" height="83.4" fill="#8033cf"/><rect x="328" y="164.7" width="1" height="83.4" fill="#8133d0"/><rect x="329" y="164.7" width="1" height="83.4" fill="#8233d0"/><rect x="330" y="164.7" width="1" height="83.4" fill="#8133d0"/><rect x="331" y="164.7" width="2" height="83.4" fill="#7e32cf"/><rect x="333" y="164.7" width="1" height="83.4" fill="#7f33cf"/><rect x="334" y="164.7" width="1" height="83.4" fill="#7032d6"/><rect x="335" y="164.7" width="1" height="83.4" fill="#5031e4"/><rect x="336" y="164.7" width="1" height="83.4" fill="#3e30ea"/><rect x="337" y="164.7" width="1" height="83.4" fill="#3e2fe9"/><rect x="338" y="164.7" width="1" height="83.4" fill="#8d2faa"/><rect x="339" y="164.7" width="2" height="83.4" fill="#942e9c"/><rect x="341" y="164.7" width="1" height="83.4" fill="#8a30af"/><rect x="342" y="164.7" width="1" height="83.4" fill="#8630b8"/><rect x="343" y="164.7" width="1" height="83.4" fill="#8330be"/><rect x="344" y="164.7" width="1" height="83.4" fill="#7931d2"/><rect x="345" y="164.7" width="1" height="83.4" fill="#6f32e6"/><rect x="346" y="164.7" width="1" height="83.4" fill="#6c32ed"/><rect x="347" y="164.7" width="1" height="83.4" fill="#8a30af"/><rect x="348" y="164.7" width="1" height="83.4" fill="#8030c5"/><rect x="349" y="164.7" width="1" height="83.4" fill="#ff4b24"/><rect x="350" y="164.7" width="1" height="83.4" fill="#ff4925"/><rect x="351" y="164.7" width="1" height="83.4" fill="#ff4626"/><rect x="352" y="164.7" width="1" height="83.4" fill="#ff4726"/><rect x="353" y="164.7" width="1" height="83.4" fill="#ff4e23"/><rect x="354" y="164.7" width="2" height="83.4" fill="#ff5122"/><rect x="356" y="164.7" width="1" height="83.4" fill="#ff4a24"/><rect x="357" y="164.7" width="1" height="83.4" fill="#ff3b2a"/><rect x="358" y="164.7" width="1" height="83.4" fill="#ff342c"/><rect x="359" y="164.7" width="3" height="83.4" fill="#ff332c"/><rect x="362" y="164.7" width="1" height="83.4" fill="#ff392a"/><rect x="363" y="164.7" width="1" height="83.4" fill="#ff4227"/><rect x="364" y="164.7" width="1" height="83.4" fill="#ff4327"/><rect x="365" y="164.7" width="1" height="83.4" fill="#fa3d2f"/><rect x="366" y="164.7" width="1" height="83.4" fill="#eb3845"/><rect x="367" y="164.7" width="1" height="83.4" fill="#dd375f"/><rect x="368" y="164.7" width="1" height="83.4" fill="#d83769"/><rect x="369" y="164.7" width="1" height="83.4" fill="#ff3419"/><rect x="370" y="164.7" width="1" height="83.4" fill="#fc3420"/><rect x="371" y="164.7" width="1" height="83.4" fill="#f5352c"/><rect x="372" y="164.7" width="1" height="83.4" fill="#ec363f"/><rect x="373" y="164.7" width="2" height="83.4" fill="#e13656"/><rect x="375" y="164.7" width="1" height="83.4" fill="#ee363c"/><rect x="376" y="164.7" width="1" height="83.4" fill="#ed363e"/><rect x="377" y="164.7" width="1" height="83.4" fill="#df365b"/><rect x="378" y="164.7" width="1" height="83.4" fill="#d83769"/><rect x="379" y="164.7" width="1" height="83.4" fill="#d7376b"/><rect x="380" y="164.7" width="1" height="83.4" fill="#d5386f"/><rect x="381" y="164.7" width="1" height="83.4" fill="#d53870"/><rect x="382" y="164.7" width="1" height="83.4" fill="#d6386e"/><rect x="383" y="164.7" width="1" height="83.4" fill="#e03b5c"/><rect x="384" y="164.7" width="1" height="83.4" fill="#f0433e"/><rect x="385" y="164.7" width="1" height="83.4" fill="#f84730"/><rect x="386" y="164.7" width="1" height="83.4" fill="#f24237"/><rect x="387" y="164.7" width="1" height="83.4" fill="#e63945"/><rect x="388" y="164.7" width="2" height="83.4" fill="#e0344c"/><rect x="390" y="164.7" width="1" height="83.4" fill="#e43445"/><rect x="391" y="164.7" width="1" height="83.4" fill="#ea3336"/><rect x="392" y="164.7" width="2" height="83.4" fill="#ee332f"/><rect x="394" y="164.7" width="1" height="83.4" fill="#e93339"/><rect x="395" y="164.7" width="1" height="83.4" fill="#e0344c"/><rect x="396" y="164.7" width="1" height="83.4" fill="#d7345f"/><rect x="397" y="164.7" width="1" height="83.4" fill="#d2346a"/><rect x="398" y="164.7" width="1" height="83.4" fill="#dc375a"/><rect x="399" y="164.7" width="1" height="83.4" fill="#f0393c"/><rect x="400" y="164.7" width="2" height="83.4" fill="#f83433"/><rect x="402" y="164.7" width="1" height="83.4" fill="#f83c30"/><rect x="403" y="164.7" width="3" height="83.4" fill="#f8402f"/><rect x="406" y="164.7" width="2" height="83.4" fill="#f8422e"/><rect x="408" y="164.7" width="1" height="83.4" fill="#f83f2f"/><rect x="409" y="164.7" width="3" height="83.4" fill="#f83e2f"/><rect x="412" y="164.7" width="1" height="83.4" fill="#d83561"/><rect x="413" y="164.7" width="1" height="83.4" fill="#e73442"/><rect x="414" y="164.7" width="1" height="83.4" fill="#f43227"/><rect x="415" y="164.7" width="1" height="83.4" fill="#f0322e"/><rect x="416" y="164.7" width="1" height="83.4" fill="#eb3339"/><rect x="417" y="164.7" width="1" height="83.4" fill="#f1322d"/><rect x="418" y="164.7" width="2" height="83.4" fill="#f73221"/><rect x="420" y="164.7" width="1" height="83.4" fill="#f2322b"/><rect x="421" y="164.7" width="1" height="83.4" fill="#ea333c"/><rect x="422" y="164.7" width="2" height="83.4" fill="#8932cf"/><rect x="424" y="164.7" width="1" height="83.4" fill="#7832d8"/><rect x="425" y="164.7" width="1" height="83.4" fill="#5132ea"/><rect x="426" y="164.7" width="1" height="83.4" fill="#3631f1"/><rect x="427" y="164.7" width="2" height="83.4" fill="#3130f0"/><rect x="429" y="164.7" width="1" height="83.4" fill="#3731f0"/><rect x="430" y="164.7" width="1" height="83.4" fill="#4233ee"/><rect x="431" y="164.7" width="1" height="83.4" fill="#4c34ef"/><rect x="432" y="164.7" width="1" height="83.4" fill="#5436f0"/><rect x="433" y="164.7" width="2" height="83.4" fill="#5836f1"/><rect x="435" y="164.7" width="1" height="83.4" fill="#5936f1"/><rect x="436" y="164.7" width="1" height="83.4" fill="#5c38f2"/><rect x="437" y="164.7" width="2" height="83.4" fill="#5d38f2"/><rect x="439" y="164.7" width="1" height="83.4" fill="#5c38f2"/><rect x="440" y="164.7" width="1" height="83.4" fill="#5c37f2"/><rect x="441" y="164.7" width="2" height="83.4" fill="#5b37f2"/><rect x="443" y="164.7" width="1" height="83.4" fill="#ee4a3f"/><rect x="444" y="164.7" width="1" height="83.4" fill="#ee4b3f"/><rect x="445" y="164.7" width="1" height="83.4" fill="#ee4a3f"/><rect x="446" y="164.7" width="1" height="83.4" fill="#ee4940"/><rect x="447" y="164.7" width="1" height="83.4" fill="#ee4441"/><rect x="448" y="164.7" width="1" height="83.4" fill="#ee3d44"/><rect x="449" y="164.7" width="1" height="83.4" fill="#ee3945"/><rect x="450" y="164.7" width="2" height="83.4" fill="#ee3a45"/><rect x="452" y="164.7" width="1" height="83.4" fill="#ee3c44"/><rect x="453" y="164.7" width="1" height="83.4" fill="#ee3b44"/><rect x="454" y="164.7" width="1" height="83.4" fill="#f2363f"/><rect x="455" y="164.7" width="1" height="83.4" fill="#fb3830"/><rect x="456" y="164.7" width="1" height="83.4" fill="#ff4125"/><rect x="457" y="164.7" width="1" height="83.4" fill="#ff4e21"/><rect x="458" y="164.7" width="1" height="83.4" fill="#ff561e"/><rect x="459" y="164.7" width="1" height="83.4" fill="#ff581e"/><rect x="460" y="164.7" width="1" height="83.4" fill="#ff531f"/><rect x="461" y="164.7" width="2" height="83.4" fill="#ff4424"/><rect x="463" y="164.7" width="1" height="83.4" fill="#ff541e"/><rect x="464" y="164.7" width="1" height="83.4" fill="#ff591d"/><rect x="465" y="164.7" width="1" height="83.4" fill="#ff5c1e"/><rect x="466" y="164.7" width="1" height="83.4" fill="#ff631e"/><rect x="467" y="164.7" width="1" height="83.4" fill="#ff6121"/><rect x="468" y="164.7" width="1" height="83.4" fill="#ff5a23"/><rect x="469" y="164.7" width="1" height="83.4" fill="#ff5125"/><rect x="470" y="164.7" width="1" height="83.4" fill="#ff4327"/><rect x="471" y="164.7" width="1" height="83.4" fill="#ff3c28"/><rect x="472" y="164.7" width="1" height="83.4" fill="#ff4426"/><rect x="473" y="164.7" width="1" height="83.4" fill="#ff5220"/><rect x="474" y="164.7" width="1" height="83.4" fill="#ff5a1e"/><rect x="475" y="164.7" width="1" height="83.4" fill="#ff5420"/><rect x="476" y="164.7" width="1" height="83.4" fill="#ff4824"/><rect x="477" y="164.7" width="2" height="83.4" fill="#ff4226"/><rect x="479" y="164.7" width="1" height="83.4" fill="#ff4326"/><rect x="480" y="164.7" width="1" height="83.4" fill="#ff4625"/><rect x="481" y="164.7" width="1" height="83.4" fill="#ff4924"/><rect x="482" y="164.7" width="1" height="83.4" fill="#ff4624"/><rect x="483" y="164.7" width="1" height="83.4" fill="#ff4525"/><rect x="484" y="164.7" width="1" height="83.4" fill="#f54130"/><rect x="485" y="164.7" width="1" height="83.4" fill="#e23745"/><rect x="486" y="164.7" width="1" height="83.4" fill="#d63254"/><rect x="487" y="164.7" width="1" height="83.4" fill="#d1325e"/><rect x="488" y="164.7" width="2" height="83.4" fill="#ce3264"/><rect x="490" y="164.7" width="1" height="83.4" fill="#ca326c"/><rect x="491" y="164.7" width="1" height="83.4" fill="#c2347e"/><rect x="492" y="164.7" width="2" height="83.4" fill="#be3486"/><rect x="494" y="164.7" width="1" height="83.4" fill="#be3487"/><rect x="495" y="164.7" width="2" height="83.4" fill="#bd3488"/><rect x="497" y="164.7" width="1" height="83.4" fill="#bd3487"/><rect x="498" y="164.7" width="1" height="83.4" fill="#e9302d"/><rect x="499" y="164.7" width="1" height="83.4" fill="#ea302b"/><rect x="500" y="164.7" width="1" height="83.4" fill="#e73030"/><rect x="501" y="164.7" width="1" height="83.4" fill="#e2313b"/><rect x="502" y="164.7" width="1" height="83.4" fill="#d8324f"/><rect x="503" y="164.7" width="1" height="83.4" fill="#ce3266"/><rect x="504" y="164.7" width="1" height="83.4" fill="#fa472e"/><rect x="505" y="164.7" width="1" height="83.4" fill="#fa4130"/><rect x="506" y="164.7" width="1" height="83.4" fill="#fa4230"/><rect x="507" y="164.7" width="1" height="83.4" fill="#fa4a2c"/><rect x="508" y="164.7" width="2" height="83.4" fill="#fa4f2b"/><rect x="510" y="164.7" width="1" height="83.4" fill="#fa4b2c"/><rect x="511" y="164.7" width="1" height="83.4" fill="#fa442f"/><rect x="512" y="164.7" width="2" height="83.4" fill="#fa4030"/><rect x="514" y="164.7" width="1" height="83.4" fill="#fa3c31"/><rect x="515" y="164.7" width="1" height="83.4" fill="#fb3f30"/><rect x="516" y="164.7" width="1" height="83.4" fill="#fe5727"/><rect x="517" y="164.7" width="1" height="83.4" fill="#ff6420"/><rect x="518" y="164.7" width="1" height="83.4" fill="#ff5421"/><rect x="519" y="164.7" width="1" height="83.4" fill="#ff4824"/><rect x="520" y="164.7" width="1" height="83.4" fill="#ff4823"/><rect x="521" y="164.7" width="1" height="83.4" fill="#ff4923"/><rect x="522" y="164.7" width="1" height="83.4" fill="#ff4225"/><rect x="523" y="164.7" width="1" height="83.4" fill="#ff3d27"/><rect x="524" y="164.7" width="1" height="83.4" fill="#ff3c27"/><rect x="525" y="164.7" width="1" height="83.4" fill="#ff4026"/><rect x="526" y="164.7" width="1" height="83.4" fill="#ff4c22"/><rect x="527" y="164.7" width="1" height="83.4" fill="#ff571e"/><rect x="528" y="164.7" width="1" height="83.4" fill="#b53493"/><rect x="529" y="164.7" width="1" height="83.4" fill="#b73490"/><rect x="530" y="164.7" width="1" height="83.4" fill="#b8348f"/><rect x="531" y="164.7" width="1" height="83.4" fill="#bc3487"/><rect x="532" y="164.7" width="1" height="83.4" fill="#c23278"/><rect x="533" y="164.7" width="1" height="83.4" fill="#c7326e"/><rect x="534" y="164.7" width="1" height="83.4" fill="#c53274"/><rect x="535" y="164.7" width="1" height="83.4" fill="#be3382"/><rect x="536" y="164.7" width="1" height="83.4" fill="#4532ee"/><rect x="537" y="164.7" width="1" height="83.4" fill="#3930ec"/><rect x="538" y="164.7" width="1" height="83.4" fill="#312eea"/><rect x="539" y="164.7" width="1" height="83.4" fill="#302ee9"/><rect x="540" y="164.7" width="1" height="83.4" fill="#342fea"/><rect x="541" y="164.7" width="1" height="83.4" fill="#3d30ec"/><rect x="542" y="164.7" width="1" height="83.4" fill="#5231e6"/><rect x="543" y="164.7" width="1" height="83.4" fill="#7031d9"/><rect x="544" y="164.7" width="2" height="83.4" fill="#8031d2"/><rect x="546" y="164.7" width="1" height="83.4" fill="#8431ca"/><rect x="547" y="164.7" width="1" height="83.4" fill="#8b30bb"/><rect x="548" y="164.7" width="1" height="83.4" fill="#9130ae"/><rect x="549" y="164.7" width="1" height="83.4" fill="#952fa6"/><rect x="550" y="164.7" width="1" height="83.4" fill="#972fa1"/><rect x="551" y="164.7" width="1" height="83.4" fill="#7432e9"/><rect x="552" y="164.7" width="1" height="83.4" fill="#9b2f9a"/><rect x="553" y="164.7" width="1" height="83.4" fill="#9030b0"/><rect x="554" y="164.7" width="2" height="83.4" fill="#8a30bd"/><rect x="556" y="164.7" width="1" height="83.4" fill="#8a30bc"/><rect x="557" y="164.7" width="1" height="83.4" fill="#8b30ba"/><rect x="558" y="164.7" width="1" height="83.4" fill="#8b30b9"/><rect x="559" y="164.7" width="1" height="83.4" fill="#432ff6"/><rect x="560" y="164.7" width="1" height="83.4" fill="#402ef6"/><rect x="561" y="164.7" width="1" height="83.4" fill="#3a2ef4"/><rect x="562" y="164.7" width="2" height="83.4" fill="#372df4"/><rect x="564" y="164.7" width="1" height="83.4" fill="#392ef4"/><rect x="565" y="164.7" width="1" height="83.4" fill="#3d2ef5"/><rect x="566" y="164.7" width="2" height="83.4" fill="#3f2ff5"/><rect x="568" y="164.7" width="1" height="83.4" fill="#402ff6"/><rect x="569" y="164.7" width="1" height="83.4" fill="#4430f6"/><rect x="570" y="164.7" width="1" height="83.4" fill="#4530f7"/><rect x="571" y="164.7" width="1" height="83.4" fill="#4230f6"/><rect x="572" y="164.7" width="1" height="83.4" fill="#3b2ef5"/><rect x="573" y="164.7" width="1" height="83.4" fill="#342df3"/><rect x="574" y="164.7" width="1" height="83.4" fill="#2d2cf1"/><rect x="575" y="164.7" width="1" height="83.4" fill="#2a2bf0"/><rect x="576" y="164.7" width="1" height="83.4" fill="#2b2bf1"/><rect x="577" y="164.7" width="1" height="83.4" fill="#322cf2"/><rect x="578" y="164.7" width="1" height="83.4" fill="#3f2ff6"/><rect x="579" y="164.7" width="1" height="83.4" fill="#4530f7"/><rect x="580" y="164.7" width="1" height="83.4" fill="#9b2e8b"/><rect x="581" y="164.7" width="1" height="83.4" fill="#962e96"/><rect x="582" y="164.7" width="1" height="83.4" fill="#8c30aa"/><rect x="583" y="164.7" width="1" height="83.4" fill="#8b30ac"/><rect x="584" y="164.7" width="1" height="83.4" fill="#922f9e"/><rect x="585" y="164.7" width="1" height="83.4" fill="#7231e1"/><rect x="586" y="164.7" width="1" height="83.4" fill="#7034e7"/><rect x="587" y="164.7" width="1" height="83.4" fill="#6a38f2"/><rect x="588" y="164.7" width="1" height="83.4" fill="#633af6"/><rect x="589" y="164.7" width="1" height="83.4" fill="#5a38f4"/><rect x="590" y="164.7" width="1" height="83.4" fill="#4e35f0"/><rect x="591" y="164.7" width="1" height="83.4" fill="#4934f0"/><rect x="592" y="164.7" width="1" height="83.4" fill="#4c35f0"/><rect x="593" y="164.7" width="1" height="83.4" fill="#4b35f0"/><rect x="594" y="164.7" width="1" height="83.4" fill="#4834f0"/><rect x="595" y="164.7" width="1" height="83.4" fill="#4634ef"/><rect x="596" y="164.7" width="1" height="83.4" fill="#5036f2"/><rect x="597" y="164.7" width="1" height="83.4" fill="#6e3cf8"/><rect x="598" y="164.7" width="1" height="83.4" fill="#8141fc"/><rect x="599" y="164.7" width="1" height="83.4" fill="#7b40fb"/><rect x="600" y="164.7" width="2" height="83.4" fill="#743ffa"/><rect x="602" y="164.7" width="1" height="83.4" fill="#7b40fb"/><rect x="603" y="164.7" width="1" height="83.4" fill="#8141fc"/><rect x="604" y="164.7" width="1" height="83.4" fill="#7840fa"/><rect x="605" y="164.7" width="1" height="83.4" fill="#603af4"/><rect x="606" y="164.7" width="1" height="83.4" fill="#3e30ea"/><rect x="607" y="164.7" width="1" height="83.4" fill="#2f2ce5"/><rect x="608" y="164.7" width="1" height="83.4" fill="#312de6"/><rect x="609" y="164.7" width="1" height="83.4" fill="#322de6"/><rect x="610" y="164.7" width="1" height="83.4" fill="#362ee7"/><rect x="611" y="164.7" width="1" height="83.4" fill="#492fe4"/><rect x="612" y="164.7" width="1" height="83.4" fill="#5e30d9"/><rect x="613" y="164.7" width="1" height="83.4" fill="#622ed2"/><rect x="614" y="164.7" width="1" height="83.4" fill="#5d2ed1"/><rect x="615" y="164.7" width="1" height="83.4" fill="#5a2dd0"/><rect x="616" y="164.7" width="1" height="83.4" fill="#582dd0"/><rect x="617" y="164.7" width="1" height="83.4" fill="#572ccf"/><rect x="618" y="164.7" width="2" height="83.4" fill="#562ccf"/><rect x="620" y="164.7" width="1" height="83.4" fill="#592cd0"/><rect x="621" y="164.7" width="1" height="83.4" fill="#5c2dd1"/><rect x="622" y="164.7" width="1" height="83.4" fill="#5a2dd0"/><rect x="623" y="164.7" width="1" height="83.4" fill="#602ed2"/><rect x="624" y="164.7" width="1" height="83.4" fill="#7232d6"/><rect x="625" y="164.7" width="2" height="83.4" fill="#7a33d8"/><rect x="627" y="164.7" width="1" height="83.4" fill="#7832d8"/><rect x="628" y="164.7" width="1" height="83.4" fill="#7332d6"/><rect x="629" y="164.7" width="1" height="83.4" fill="#6530da"/><rect x="630" y="164.7" width="1" height="83.4" fill="#4d30e3"/><rect x="631" y="164.7" width="2" height="83.4" fill="#412fe7"/><rect x="633" y="164.7" width="1" height="83.4" fill="#4530e8"/><rect x="634" y="164.7" width="1" height="83.4" fill="#4c31e9"/><rect x="635" y="164.7" width="1" height="83.4" fill="#4a31e8"/><rect x="636" y="164.7" width="1" height="83.4" fill="#3f2fe6"/><rect x="637" y="164.7" width="1" height="83.4" fill="#a52f85"/><rect x="638" y="164.7" width="1" height="83.4" fill="#9f3091"/><rect x="639" y="164.7" width="1" height="83.4" fill="#9330aa"/><rect x="640" y="164.7" width="2" height="83.4" fill="#8d31b6"/><rect x="642" y="164.7" width="1" height="83.4" fill="#8b31ba"/><rect x="643" y="164.7" width="1" height="83.4" fill="#8931bf"/><rect x="644" y="164.7" width="1" height="83.4" fill="#8c31ba"/><rect x="645" y="164.7" width="2" height="83.4" fill="#8e31b5"/><rect x="647" y="164.7" width="1" height="83.4" fill="#3130f1"/><rect x="648" y="164.7" width="1" height="83.4" fill="#282eef"/><rect x="649" y="164.7" width="2" height="83.4" fill="#222dee"/><rect x="651" y="164.7" width="1" height="83.4" fill="#292ef0"/><rect x="652" y="164.7" width="1" height="83.4" fill="#3631f3"/><rect x="653" y="164.7" width="2" height="83.4" fill="#3d32f5"/><rect x="655" y="164.7" width="1" height="83.4" fill="#3e32f5"/><rect x="656" y="164.7" width="1" height="83.4" fill="#4033f5"/><rect x="657" y="164.7" width="3" height="83.4" fill="#4133f5"/><rect x="660" y="164.7" width="1" height="83.4" fill="#4033f5"/><rect x="661" y="164.7" width="3" height="83.4" fill="#3f32f5"/><rect x="664" y="164.7" width="1" height="83.4" fill="#3731f3"/><rect x="665" y="164.7" width="1" height="83.4" fill="#282ef0"/><rect x="666" y="164.7" width="1" height="83.4" fill="#202dee"/><rect x="667" y="164.7" width="1" height="83.4" fill="#2a2ff0"/><rect x="668" y="164.7" width="1" height="83.4" fill="#3d32f5"/><rect x="669" y="164.7" width="1" height="83.4" fill="#4534f6"/><rect x="670" y="164.7" width="1" height="83.4" fill="#4233f6"/><rect x="671" y="164.7" width="1" height="83.4" fill="#4133f5"/><rect x="672" y="164.7" width="1" height="83.4" fill="#3831f3"/><rect x="673" y="164.7" width="1" height="83.4" fill="#272ef0"/><rect x="674" y="164.7" width="2" height="83.4" fill="#1e2cee"/><rect x="676" y="164.7" width="1" height="83.4" fill="#242def"/><rect x="677" y="164.7" width="1" height="83.4" fill="#3030f2"/><rect x="678" y="164.7" width="1" height="83.4" fill="#3430f2"/><rect x="679" y="164.7" width="1" height="83.4" fill="#3230f2"/><rect x="680" y="164.7" width="1" height="83.4" fill="#3430f2"/><rect x="681" y="164.7" width="1" height="83.4" fill="#3c32f4"/><rect x="682" y="164.7" width="1" height="83.4" fill="#4233f6"/><rect x="683" y="164.7" width="2" height="83.4" fill="#4433f6"/><rect x="685" y="164.7" width="1" height="83.4" fill="#4132f6"/><rect x="686" y="164.7" width="1" height="83.4" fill="#3d32f4"/><rect x="687" y="164.7" width="1" height="83.4" fill="#3631f3"/><rect x="688" y="164.7" width="1" height="83.4" fill="#2c2ff1"/><rect x="689" y="164.7" width="1" height="83.4" fill="#272ef0"/><rect x="690" y="164.7" width="1" height="83.4" fill="#2e2ff1"/><rect x="691" y="164.7" width="1" height="83.4" fill="#3932f4"/><rect x="692" y="164.7" width="1" height="83.4" fill="#3d32f4"/><rect x="693" y="164.7" width="1" height="83.4" fill="#3631f3"/><rect x="694" y="164.7" width="1" height="83.4" fill="#2c2ff0"/><rect x="695" y="164.7" width="1" height="83.4" fill="#292ef0"/><rect x="696" y="164.7" width="1" height="83.4" fill="#2f30f1"/><rect x="697" y="164.7" width="1" height="83.4" fill="#3230f2"/><rect x="698" y="164.7" width="1" height="83.4" fill="#2d2ff1"/><rect x="699" y="164.7" width="1" height="83.4" fill="#242eef"/><rect x="700" y="164.7" width="1" height="83.4" fill="#1f2dee"/><rect x="701" y="164.7" width="1" height="83.4" fill="#272ef0"/><rect x="702" y="164.7" width="1" height="83.4" fill="#3631f3"/><rect x="703" y="164.7" width="1" height="83.4" fill="#3c32f4"/><rect x="704" y="164.7" width="1" height="83.4" fill="#3a31f4"/><rect x="705" y="164.7" width="2" height="83.4" fill="#3831f3"/><rect x="707" y="164.7" width="1" height="83.4" fill="#3230f2"/><rect x="708" y="164.7" width="1" height="83.4" fill="#252eef"/><rect x="709" y="164.7" width="1" height="83.4" fill="#222eee"/><rect x="710" y="164.7" width="1" height="83.4" fill="#282ef0"/><rect x="711" y="164.7" width="1" height="83.4" fill="#2e30f1"/><rect x="712" y="164.7" width="1" height="83.4" fill="#3430f2"/><rect x="713" y="164.7" width="1" height="83.4" fill="#3030f2"/><rect x="714" y="164.7" width="1" height="83.4" fill="#242dee"/><rect x="715" y="164.7" width="1" height="83.4" fill="#222dee"/><rect x="716" y="164.7" width="1" height="83.4" fill="#2e30f1"/><rect x="717" y="164.7" width="1" height="83.4" fill="#3430f2"/><rect x="718" y="164.7" width="1" height="83.4" fill="#2d2ff1"/><rect x="719" y="164.7" width="5" height="83.4" fill="#292ef0"/><rect x="724" y="164.7" width="1" height="83.4" fill="#2b2ef0"/><rect x="725" y="164.7" width="1" height="83.4" fill="#2f30f2"/><rect x="726" y="164.7" width="1" height="83.4" fill="#3130f2"/><rect x="727" y="164.7" width="1" height="83.4" fill="#3731f3"/><rect x="728" y="164.7" width="1" height="83.4" fill="#3a32f4"/><rect x="729" y="164.7" width="1" height="83.4" fill="#2e30f1"/><rect x="730" y="164.7" width="2" height="83.4" fill="#252eef"/><rect x="732" y="164.7" width="1" height="83.4" fill="#2d2ff1"/><rect x="733" y="164.7" width="2" height="83.4" fill="#3630f3"/><rect x="735" y="164.7" width="1" height="83.4" fill="#3c32f4"/><rect x="736" y="164.7" width="1" height="83.4" fill="#4634f6"/><rect x="737" y="164.7" width="1" height="83.4" fill="#4834f7"/><rect x="738" y="164.7" width="1" height="83.4" fill="#3f32f5"/><rect x="739" y="164.7" width="1" height="83.4" fill="#2e30f1"/><rect x="740" y="164.7" width="1" height="83.4" fill="#252eef"/><rect x="741" y="164.7" width="1" height="83.4" fill="#242eef"/><rect x="742" y="164.7" width="2" height="83.4" fill="#202dee"/><rect x="744" y="164.7" width="1" height="83.4" fill="#232dee"/><rect x="745" y="164.7" width="1" height="83.4" fill="#262ef0"/><rect x="746" y="164.7" width="1" height="83.4" fill="#282ef0"/><rect x="747" y="164.7" width="1" height="83.4" fill="#99338c"/><rect x="748" y="164.7" width="1" height="83.4" fill="#9b3389"/><rect x="749" y="164.7" width="1" height="83.4" fill="#9e3382"/><rect x="750" y="164.7" width="1" height="83.4" fill="#a0337f"/><rect x="751" y="164.7" width="3" height="83.4" fill="#2a2ef0"/><rect x="754" y="164.7" width="1" height="83.4" fill="#2f2ff1"/><rect x="755" y="164.7" width="2" height="83.4" fill="#3630f2"/><rect x="757" y="164.7" width="1" height="83.4" fill="#3330f2"/><rect x="758" y="164.7" width="1" height="83.4" fill="#302ff1"/><rect x="759" y="164.7" width="1" height="83.4" fill="#2f2ff1"/><rect x="760" y="164.7" width="1" height="83.4" fill="#2b2ef0"/><rect x="761" y="164.7" width="1" height="83.4" fill="#222dee"/><rect x="762" y="164.7" width="1" height="83.4" fill="#262def"/><rect x="763" y="164.7" width="1" height="83.4" fill="#3430f2"/><rect x="764" y="164.7" width="1" height="83.4" fill="#3c31f4"/><rect x="765" y="164.7" width="1" height="83.4" fill="#3830f3"/><rect x="766" y="164.7" width="1" height="83.4" fill="#2f2ff1"/><rect x="767" y="164.7" width="1" height="83.4" fill="#2b2ef0"/><rect x="768" y="164.7" width="1" height="83.4" fill="#2c2ef0"/><rect x="769" y="164.7" width="2" height="83.4" fill="#2f2ff1"/><rect x="771" y="164.7" width="1" height="83.4" fill="#2d2ff0"/><rect x="772" y="164.7" width="1" height="83.4" fill="#b1337a"/><rect x="773" y="164.7" width="1" height="83.4" fill="#b53372"/><rect x="774" y="164.7" width="1" height="83.4" fill="#bc3262"/><rect x="775" y="164.7" width="1" height="83.4" fill="#c0325a"/><rect x="776" y="164.7" width="1" height="83.4" fill="#7b33d3"/><rect x="777" y="164.7" width="2" height="83.4" fill="#7c33d3"/><rect x="779" y="164.7" width="1" height="83.4" fill="#7832d2"/><rect x="780" y="164.7" width="1" height="83.4" fill="#7031d1"/><rect x="781" y="164.7" width="1" height="83.4" fill="#662fcf"/><rect x="782" y="164.7" width="2" height="83.4" fill="#622ece"/><rect x="784" y="164.7" width="1" height="83.4" fill="#5c2ecd"/><rect x="785" y="164.7" width="1" height="83.4" fill="#6732d1"/><rect x="786" y="164.7" width="1" height="83.4" fill="#833cdb"/><rect x="787" y="164.7" width="1" height="83.4" fill="#9842e2"/><rect x="788" y="164.7" width="1" height="83.4" fill="#a845e5"/><rect x="789" y="164.7" width="1" height="83.4" fill="#af46e7"/><rect x="790" y="164.7" width="1" height="83.4" fill="#4633f3"/><rect x="791" y="164.7" width="1" height="83.4" fill="#4432f2"/><rect x="792" y="164.7" width="1" height="83.4" fill="#4833f3"/><rect x="793" y="164.7" width="1" height="83.4" fill="#4a34f4"/><rect x="794" y="164.7" width="1" height="83.4" fill="#4432f2"/><rect x="795" y="164.7" width="1" height="83.4" fill="#3b31f0"/><rect x="796" y="164.7" width="1" height="83.4" fill="#3930f0"/><rect x="797" y="164.7" width="1" height="83.4" fill="#3d31f0"/><rect x="798" y="164.7" width="1" height="83.4" fill="#3c31f0"/><rect x="799" y="164.7" width="1" height="83.4" fill="#3730f0"/><rect x="800" y="164.7" width="1" height="83.4" fill="#3b31f0"/><rect x="801" y="164.7" width="1" height="83.4" fill="#4833f4"/><rect x="802" y="164.7" width="1" height="83.4" fill="#5034f5"/><rect x="803" y="164.7" width="1" height="83.4" fill="#5235f6"/><rect x="804" y="164.7" width="2" height="83.4" fill="#5335f6"/><rect x="806" y="164.7" width="2" height="83.4" fill="#5435f6"/><rect x="808" y="164.7" width="1" height="83.4" fill="#5034f5"/><rect x="809" y="164.7" width="1" height="83.4" fill="#4833f3"/><rect x="810" y="164.7" width="2" height="83.4" fill="#4432f2"/><rect x="812" y="164.7" width="1" height="83.4" fill="#3e31f1"/><rect x="813" y="164.7" width="1" height="83.4" fill="#352fef"/><rect x="814" y="164.7" width="2" height="83.4" fill="#9244f4"/><rect x="816" y="164.7" width="1" height="83.4" fill="#9444f4"/><rect x="817" y="164.7" width="2" height="83.4" fill="#9845f5"/><rect x="819" y="164.7" width="1" height="83.4" fill="#9c47f6"/><rect x="820" y="164.7" width="1" height="83.4" fill="#a44cf9"/><rect x="821" y="164.7" width="1" height="83.4" fill="#a44ef9"/><rect x="822" y="164.7" width="1" height="83.4" fill="#a04df8"/><rect x="823" y="164.7" width="1" height="83.4" fill="#9549f6"/><rect x="824" y="164.7" width="1" height="83.4" fill="#8242f3"/><rect x="825" y="164.7" width="1" height="83.4" fill="#7d3ef2"/><rect x="826" y="164.7" width="1" height="83.4" fill="#803ff3"/><rect x="827" y="164.7" width="1" height="83.4" fill="#7f3ff3"/><rect x="828" y="164.7" width="1" height="83.4" fill="#7c3ef2"/><rect x="829" y="164.7" width="1" height="83.4" fill="#683af2"/><rect x="830" y="164.7" width="1" height="83.4" fill="#4333f1"/><rect x="831" y="164.7" width="1" height="83.4" fill="#2f2ff1"/><rect x="832" y="164.7" width="1" height="83.4" fill="#2c2ef0"/><rect x="833" y="164.7" width="1" height="83.4" fill="#2f2ff1"/><rect x="834" y="164.7" width="1" height="83.4" fill="#3730f3"/><rect x="835" y="164.7" width="2" height="83.4" fill="#3b31f4"/><rect x="837" y="164.7" width="1" height="83.4" fill="#3630f3"/><rect x="838" y="164.7" width="1" height="83.4" fill="#2a2ef0"/><rect x="839" y="164.7" width="1" height="83.4" fill="#222dee"/><rect x="840" y="164.7" width="1" height="83.4" fill="#3630f0"/><rect x="841" y="164.7" width="1" height="83.4" fill="#5f38f6"/><rect x="842" y="164.7" width="2" height="83.4" fill="#743bf8"/><rect x="844" y="164.7" width="1" height="83.4" fill="#703af7"/><rect x="845" y="164.7" width="1" height="83.4" fill="#6839f6"/><rect x="846" y="164.7" width="1" height="83.4" fill="#6438f5"/><rect x="847" y="164.7" width="1" height="83.4" fill="#6839f6"/><rect x="848" y="164.7" width="1" height="83.4" fill="#7c3df8"/><rect x="849" y="164.7" width="1" height="83.4" fill="#9a42fa"/><rect x="850" y="164.7" width="1" height="83.4" fill="#a144f9"/><rect x="851" y="164.7" width="1" height="83.4" fill="#9642f6"/><rect x="852" y="164.7" width="1" height="83.4" fill="#9141f5"/><rect x="853" y="164.7" width="1" height="83.4" fill="#8e41f4"/><rect x="854" y="164.7" width="1" height="83.4" fill="#8940f4"/><rect x="855" y="164.7" width="3" height="83.4" fill="#8640f3"/><rect x="858" y="164.7" width="1" height="83.4" fill="#853ff3"/><rect x="859" y="164.7" width="1" height="83.4" fill="#833ff2"/><rect x="860" y="164.7" width="2" height="83.4" fill="#823ff2"/><rect x="862" y="164.7" width="1" height="83.4" fill="#8c41f4"/><rect x="863" y="164.7" width="1" height="83.4" fill="#a245f7"/><rect x="864" y="164.7" width="1" height="83.4" fill="#aa47f8"/><rect x="865" y="164.7" width="1" height="83.4" fill="#a746f8"/><rect x="866" y="164.7" width="2" height="83.4" fill="#a546f7"/><rect x="868" y="164.7" width="1" height="83.4" fill="#ab47f8"/><rect x="869" y="164.7" width="1" height="83.4" fill="#b348fa"/><rect x="870" y="164.7" width="1" height="83.4" fill="#b148fa"/><rect x="871" y="164.7" width="1" height="83.4" fill="#ad47f9"/><rect x="872" y="164.7" width="1" height="83.4" fill="#ab47f8"/><rect x="873" y="164.7" width="1" height="83.4" fill="#a746f8"/><rect x="874" y="164.7" width="2" height="83.4" fill="#a546f7"/><rect x="876" y="164.7" width="1" height="83.4" fill="#a646f7"/><rect x="877" y="164.7" width="1" height="83.4" fill="#aa47f8"/><rect x="878" y="164.7" width="1" height="83.4" fill="#a746f8"/><rect x="879" y="164.7" width="1" height="83.4" fill="#a546f9"/><rect x="880" y="164.7" width="1" height="83.4" fill="#ac47fc"/><rect x="881" y="164.7" width="2" height="83.4" fill="#b148fd"/><rect x="883" y="164.7" width="1" height="83.4" fill="#ae47fc"/><rect x="884" y="164.7" width="1" height="83.4" fill="#a746fb"/><rect x="885" y="164.7" width="1" height="83.4" fill="#a445fa"/><rect x="886" y="164.7" width="2" height="83.4" fill="#a245f9"/><rect x="888" y="164.7" width="1" height="83.4" fill="#b844f7"/><rect x="889" y="164.7" width="1" height="83.4" fill="#dc42f2"/><rect x="890" y="164.7" width="1" height="83.4" fill="#e640ed"/><rect x="891" y="164.7" width="1" height="83.4" fill="#e340ed"/><rect x="892" y="164.7" width="1" height="83.4" fill="#ea40ee"/><rect x="893" y="164.7" width="1" height="83.4" fill="#d641f0"/><rect x="894" y="164.7" width="1" height="83.4" fill="#aa41f2"/><rect x="895" y="164.7" width="1" height="83.4" fill="#9341f3"/><rect x="896" y="164.7" width="1" height="83.4" fill="#9842f4"/><rect x="897" y="164.7" width="1" height="83.4" fill="#a044f6"/><rect x="898" y="164.7" width="1" height="83.4" fill="#9d44f5"/><rect x="899" y="164.7" width="1" height="83.4" fill="#9442f3"/><rect x="900" y="164.7" width="1" height="83.4" fill="#9943f4"/><rect x="901" y="164.7" width="1" height="83.4" fill="#9f44f6"/><rect x="902" y="164.7" width="1" height="83.4" fill="#8e40f4"/><rect x="903" y="164.7" width="1" height="83.4" fill="#6b36f1"/><rect x="904" y="164.7" width="2" height="83.4" fill="#5a32ef"/><rect x="906" y="164.7" width="3" height="83.4" fill="#882e8e"/><rect x="909" y="164.7" width="3" height="83.4" fill="#5b32eb"/><rect x="912" y="164.7" width="3" height="83.4" fill="#8f31ac"/><rect x="915" y="164.7" width="1" height="83.4" fill="#96309d"/><rect x="916" y="164.7" width="1" height="83.4" fill="#a5307e"/><rect x="917" y="164.7" width="1" height="83.4" fill="#ac2f6f"/><rect x="918" y="164.7" width="1" height="83.4" fill="#ac2f6e"/><rect x="919" y="164.7" width="1" height="83.4" fill="#a92f74"/><rect x="920" y="164.7" width="1" height="83.4" fill="#a43080"/><rect x="921" y="164.7" width="1" height="83.4" fill="#3b31f1"/><rect x="922" y="164.7" width="1" height="83.4" fill="#3931f1"/><rect x="923" y="164.7" width="1" height="83.4" fill="#2b2fee"/><rect x="924" y="164.7" width="1" height="83.4" fill="#222dec"/><rect x="925" y="164.7" width="1" height="83.4" fill="#212dec"/><rect x="926" y="164.7" width="1" height="83.4" fill="#222dec"/><rect x="927" y="164.7" width="1" height="83.4" fill="#262eec"/><rect x="928" y="164.7" width="1" height="83.4" fill="#2c2fee"/><rect x="929" y="164.7" width="1" height="83.4" fill="#3931f1"/><rect x="930" y="164.7" width="1" height="83.4" fill="#4433f4"/><rect x="931" y="164.7" width="1" height="83.4" fill="#4333f4"/><rect x="932" y="164.7" width="1" height="83.4" fill="#3a31f1"/><rect x="933" y="164.7" width="1" height="83.4" fill="#3730f0"/><rect x="934" y="164.7" width="1" height="83.4" fill="#3a31f1"/><rect x="935" y="164.7" width="1" height="83.4" fill="#9631a8"/><rect x="936" y="164.7" width="1" height="83.4" fill="#9d3099"/><rect x="937" y="164.7" width="1" height="83.4" fill="#a72f86"/><rect x="938" y="164.7" width="1" height="83.4" fill="#a4308c"/><rect x="939" y="164.7" width="1" height="83.4" fill="#a3308e"/><rect x="940" y="164.7" width="1" height="83.4" fill="#aa2f80"/><rect x="941" y="164.7" width="2" height="83.4" fill="#e73339"/><rect x="943" y="164.7" width="1" height="83.4" fill="#eb323a"/><rect x="944" y="164.7" width="1" height="83.4" fill="#f22f3e"/><rect x="945" y="164.7" width="1" height="83.4" fill="#f62c40"/><rect x="946" y="164.7" width="1" height="83.4" fill="#f62841"/><rect x="947" y="164.7" width="2" height="83.4" fill="#f62642"/><rect x="949" y="164.7" width="1" height="83.4" fill="#f62941"/><rect x="950" y="164.7" width="1" height="83.4" fill="#f62d3f"/><rect x="951" y="164.7" width="3" height="83.4" fill="#2b2eee"/><rect x="954" y="164.7" width="2" height="83.4" fill="#2a2eee"/><rect x="956" y="164.7" width="1" height="83.4" fill="#2e2fef"/><rect x="957" y="164.7" width="1" height="83.4" fill="#3630f0"/><rect x="958" y="164.7" width="1" height="83.4" fill="#3831f1"/><rect x="959" y="164.7" width="1" height="83.4" fill="#3530f0"/><rect x="960" y="164.7" width="1" height="83.4" fill="#e83648"/><rect x="961" y="164.7" width="1" height="83.4" fill="#e7364b"/><rect x="962" y="164.7" width="1" height="83.4" fill="#ec3b44"/><rect x="963" y="164.7" width="1" height="83.4" fill="#f93e36"/><rect x="964" y="164.7" width="1" height="83.4" fill="#ff3232"/><rect x="965" y="164.7" width="1" height="83.4" fill="#ff2a35"/></g>
<clipPath id="cg"><polygon points="58.6,333.9 58.6,294.2 59.6,296.1 60.6,296.7 61.6,295.0 62.6,292.1 63.6,286.8 64.6,284.9 65.6,288.0 66.6,267.8 67.6,268.7 68.6,285.6 69.6,285.3 70.6,286.3 71.6,286.5 72.6,284.4 73.6,281.8 74.6,288.4 75.6,295.9 76.6,288.8 77.6,279.7 78.6,288.5 79.6,290.4 80.6,284.6 81.6,282.3 82.6,287.6 83.6,288.0 84.6,279.7 85.6,277.7 86.6,281.7 87.6,283.5 88.6,287.1 89.6,292.3 90.6,292.0 91.6,293.2 92.6,293.2 93.6,294.1 94.6,294.2 95.6,293.3 96.6,293.3 97.6,292.6 98.6,292.9 99.6,291.4 100.6,291.1 101.6,290.0 102.6,289.7 103.6,289.2 104.6,289.2 105.6,289.6 106.6,289.7 107.6,290.2 108.6,290.1 109.6,290.7 110.6,290.8 111.6,291.3 112.6,291.1 113.6,290.6 114.6,291.8 115.6,292.2 116.6,291.8 117.6,290.7 118.6,290.2 119.6,288.9 120.6,289.8 121.6,289.7 122.6,289.6 123.6,289.6 124.6,291.0 125.6,291.4 126.6,290.4 127.6,291.7 128.6,290.1 129.6,288.7 130.6,287.8 131.6,288.9 132.6,289.5 133.6,288.6 134.6,288.9 135.6,287.5 136.6,287.9 137.6,288.2 138.6,290.8 139.6,292.4 140.6,292.1 141.6,293.1 142.6,292.1 143.6,291.0 144.6,290.9 145.6,289.8 146.6,290.7 147.6,291.6 148.6,292.5 149.6,292.2 150.6,292.2 151.6,293.5 152.6,292.9 153.6,293.4 154.6,292.4 155.6,290.8 156.6,290.6 157.6,290.7 158.6,290.9 159.6,290.8 160.6,290.8 161.6,290.8 162.6,291.3 163.6,291.4 164.6,292.1 165.6,293.4 166.6,292.7 167.6,292.6 168.6,293.3 169.6,293.3 170.6,294.0 171.6,293.9 172.6,294.5 173.6,294.7 174.6,293.9 175.6,294.7 176.6,294.8 177.6,293.9 178.6,294.8 179.6,294.5 180.6,294.8 181.6,294.4 182.6,294.9 183.6,295.0 184.6,294.1 185.6,294.3 186.6,295.3 187.6,295.8 188.6,294.5 189.6,293.9 190.6,293.2 191.6,291.1 192.6,288.5 193.6,286.9 194.6,286.7 195.6,287.4 196.6,287.8 197.6,288.8 198.6,289.8 199.6,288.8 200.6,289.7 201.6,291.1 202.6,298.0 203.6,296.5 204.6,300.3 205.6,303.7 206.6,307.2 207.6,309.0 208.6,310.4 209.6,309.6 210.6,309.9 211.6,310.0 212.6,310.7 213.6,308.3 214.6,309.2 215.6,309.7 216.6,310.0 217.6,310.4 218.6,310.8 219.6,310.1 220.6,309.9 221.6,310.0 222.6,310.9 223.6,310.6 224.6,311.8 225.6,311.9 226.6,310.5 227.6,310.2 228.6,310.9 229.6,311.3 230.6,311.0 231.6,309.4 232.6,308.0 233.6,307.3 234.6,307.0 235.6,305.2 236.6,304.4 237.6,303.5 238.6,300.3 239.6,296.6 240.6,294.0 241.6,289.6 242.6,288.3 243.6,288.8 244.6,287.9 245.6,287.9 246.6,287.0 247.6,287.6 248.6,287.4 249.6,286.9 250.6,288.1 251.6,288.8 252.6,289.1 253.6,290.3 254.6,291.3 255.6,292.6 256.6,293.4 257.6,293.8 258.6,293.8 259.6,292.6 260.6,292.6 261.6,290.8 262.6,291.6 263.6,290.8 264.6,290.6 265.6,290.4 266.6,290.6 267.6,290.4 268.6,289.9 269.6,290.4 270.6,288.5 271.6,287.5 272.6,287.6 273.6,287.5 274.6,287.5 275.6,288.3 276.6,289.9 277.6,292.3 278.6,292.1 279.6,291.9 280.6,290.3 281.6,289.5 282.6,287.3 283.6,284.0 284.6,279.4 285.6,278.8 286.6,280.7 287.6,286.6 288.6,290.2 289.6,280.2 290.6,275.2 291.6,271.1 292.6,271.6 293.6,275.0 294.6,277.4 295.6,284.6 296.6,289.9 297.6,293.6 298.6,293.1 299.6,292.8 300.6,291.6 301.6,285.5 302.6,283.3 303.6,283.9 304.6,287.2 305.6,292.1 306.6,293.5 307.6,292.3 308.6,279.9 309.6,273.1 310.6,274.8 311.6,280.4 312.6,284.8 313.6,287.9 314.6,289.3 315.6,291.4 316.6,294.2 317.6,296.3 318.6,297.5 319.6,298.2 320.6,297.9 321.6,295.0 322.6,291.6 323.6,290.6 324.6,291.9 325.6,295.2 326.6,297.6 327.6,298.2 328.6,298.0 329.6,296.7 330.6,295.4 331.6,293.3 332.6,291.5 333.6,290.0 334.6,289.4 335.6,289.8 336.6,291.2 337.6,292.2 338.6,292.3 339.6,292.1 340.6,290.9 341.6,291.1 342.6,290.8 343.6,291.1 344.6,290.9 345.6,290.3 346.6,292.2 347.6,293.2 348.6,293.6 349.6,294.1 350.6,292.6 351.6,292.6 352.6,291.2 353.6,290.4 354.6,289.0 355.6,288.9 356.6,289.9 357.6,290.5 358.6,290.1 359.6,290.8 360.6,290.0 361.6,290.0 362.6,290.6 363.6,289.2 364.6,289.0 365.6,288.8 366.6,290.4 367.6,290.0 368.6,290.3 369.6,292.1 370.6,293.0 371.6,296.0 372.6,297.8 373.6,298.7 374.6,299.5 375.6,299.4 376.6,297.7 377.6,294.6 378.6,293.7 379.6,290.3 380.6,283.5 381.6,277.9 382.6,274.5 383.6,271.4 384.6,268.9 385.6,272.2 386.6,277.0 387.6,283.9 388.6,289.1 389.6,293.4 390.6,294.2 391.6,294.7 392.6,291.9 393.6,285.1 394.6,284.0 395.6,286.1 396.6,290.0 397.6,292.6 398.6,292.7 399.6,292.8 400.6,285.8 401.6,277.5 402.6,272.0 403.6,269.2 404.6,270.3 405.6,274.9 406.6,279.9 407.6,286.8 408.6,288.1 409.6,288.7 410.6,289.5 411.6,288.8 412.6,288.7 413.6,289.7 414.6,289.9 415.6,289.3 416.6,288.1 417.6,287.4 418.6,285.7 419.6,285.6 420.6,285.3 421.6,285.7 422.6,285.3 423.6,286.0 424.6,287.4 425.6,288.5 426.6,287.9 427.6,288.8 428.6,286.1 429.6,281.8 430.6,279.5 431.6,278.0 432.6,277.7 433.6,279.7 434.6,282.4 435.6,284.2 436.6,283.8 437.6,283.5 438.6,282.7 439.6,283.6 440.6,283.2 441.6,284.9 442.6,284.3 443.6,284.6 444.6,284.5 445.6,285.2 446.6,285.3 447.6,282.4 448.6,279.9 449.6,279.2 450.6,278.4 451.6,276.9 452.6,277.6 453.6,278.1 454.6,277.6 455.6,277.7 456.6,278.2 457.6,279.2 458.6,278.8 459.6,278.9 460.6,278.8 461.6,278.9 462.6,279.1 463.6,278.2 464.6,277.1 465.6,277.4 466.6,278.0 467.6,278.4 468.6,277.9 469.6,279.0 470.6,278.4 471.6,278.8 472.6,279.0 473.6,277.6 474.6,277.1 475.6,281.2 476.6,284.0 477.6,279.8 478.6,278.6 479.6,278.0 480.6,276.4 481.6,277.0 482.6,277.4 483.6,277.7 484.6,277.5 485.6,277.9 486.6,278.2 487.6,277.1 488.6,277.1 489.6,276.9 490.6,277.6 491.6,278.6 492.6,277.4 493.6,278.2 494.6,277.9 495.6,276.5 496.6,278.2 497.6,277.9 498.6,279.0 499.6,279.2 500.6,278.2 501.6,278.4 502.6,278.0 503.6,278.5 504.6,279.0 505.6,281.0 506.6,282.9 507.6,284.2 508.6,283.2 509.6,279.1 510.6,276.9 511.6,280.7 512.6,285.1 513.6,285.1 514.6,284.9 515.6,284.4 516.6,284.7 517.6,284.2 518.6,283.0 519.6,283.5 520.6,283.3 521.6,282.9 522.6,284.4 523.6,283.7 524.6,284.3 525.6,285.3 526.6,285.5 527.6,285.4 528.6,285.4 529.6,285.0 530.6,284.7 531.6,284.4 532.6,284.4 533.6,285.5 534.6,285.8 535.6,285.7 536.6,286.2 537.6,286.0 538.6,286.2 539.6,285.8 540.6,282.7 541.6,280.1 542.6,280.4 543.6,279.8 544.6,280.4 545.6,280.2 546.6,280.5 547.6,281.6 548.6,283.8 549.6,285.3 550.6,284.8 551.6,285.7 552.6,284.8 553.6,285.0 554.6,284.6 555.6,284.5 556.6,285.3 557.6,285.9 558.6,286.2 559.6,287.4 560.6,288.1 561.6,288.7 562.6,289.0 563.6,289.0 564.6,289.4 565.6,289.4 566.6,290.4 567.6,290.4 568.6,291.0 569.6,291.2 570.6,290.8 571.6,291.1 572.6,292.1 573.6,291.2 574.6,292.4 575.6,292.0 576.6,291.4 577.6,290.0 578.6,289.7 579.6,289.3 580.6,288.9 581.6,289.0 582.6,289.4 583.6,290.3 584.6,292.2 585.6,291.8 586.6,292.0 587.6,292.3 588.6,291.5 589.6,293.2 590.6,293.6 591.6,293.3 592.6,292.6 593.6,291.8 594.6,290.7 595.6,290.4 596.6,289.5 597.6,290.4 598.6,290.8 599.6,289.8 600.6,288.9 601.6,288.6 602.6,290.2 603.6,290.7 604.6,291.7 605.6,290.9 606.6,289.5 607.6,290.4 608.6,290.9 609.6,291.4 610.6,292.0 611.6,292.5 612.6,291.6 613.6,292.3 614.6,291.9 615.6,290.8 616.6,291.5 617.6,290.7 618.6,290.3 619.6,289.2 620.6,288.6 621.6,288.5 622.6,289.7 623.6,290.4 624.6,290.6 625.6,290.4 626.6,291.0 627.6,290.6 628.6,290.1 629.6,290.0 630.6,289.0 631.6,288.9 632.6,288.7 633.6,289.0 634.6,289.1 635.6,288.9 636.6,288.9 637.6,289.3 638.6,289.0 639.6,290.9 640.6,293.4 641.6,293.8 642.6,291.3 643.6,290.0 644.6,289.4 645.6,288.7 646.6,288.4 647.6,288.4 648.6,288.3 649.6,287.2 650.6,286.5 651.6,286.3 652.6,287.2 653.6,286.3 654.6,286.7 655.6,286.3 656.6,286.3 657.6,286.5 658.6,287.7 659.6,288.2 660.6,289.0 661.6,290.1 662.6,291.2 663.6,292.6 664.6,292.8 665.6,293.2 666.6,294.3 667.6,294.0 668.6,293.6 669.6,291.8 670.6,291.8 671.6,291.6 672.6,290.9 673.6,292.1 674.6,290.9 675.6,290.5 676.6,290.8 677.6,290.1 678.6,290.5 679.6,289.8 680.6,289.2 681.6,289.4 682.6,290.8 683.6,290.5 684.6,291.6 685.6,291.6 686.6,291.9 687.6,290.6 688.6,290.1 689.6,289.7 690.6,290.1 691.6,289.7 692.6,289.1 693.6,288.5 694.6,289.1 695.6,289.5 696.6,289.3 697.6,288.9 698.6,289.3 699.6,289.8 700.6,290.2 701.6,290.1 702.6,290.3 703.6,291.2 704.6,291.7 705.6,290.8 706.6,291.8 707.6,290.8 708.6,290.9 709.6,290.8 710.6,290.5 711.6,289.0 712.6,289.3 713.6,289.6 714.6,290.1 715.6,288.7 716.6,288.7 717.6,288.9 718.6,287.4 719.6,287.2 720.6,286.6 721.6,287.5 722.6,288.5 723.6,288.0 724.6,289.4 725.6,290.0 726.6,289.8 727.6,289.0 728.6,289.1 729.6,287.9 730.6,287.6 731.6,287.6 732.6,288.5 733.6,288.3 734.6,288.2 735.6,288.2 736.6,288.6 737.6,288.0 738.6,287.8 739.6,286.9 740.6,286.7 741.6,286.0 742.6,286.6 743.6,285.7 744.6,287.0 745.6,288.1 746.6,288.6 747.6,288.2 748.6,288.5 749.6,289.5 750.6,289.3 751.6,289.8 752.6,289.6 753.6,288.4 754.6,288.6 755.6,287.8 756.6,286.7 757.6,286.4 758.6,285.7 759.6,285.9 760.6,286.6 761.6,286.6 762.6,288.4 763.6,288.9 764.6,287.2 765.6,285.7 766.6,284.0 767.6,284.1 768.6,286.6 769.6,289.8 770.6,289.6 771.6,288.6 772.6,288.7 773.6,289.6 774.6,288.3 775.6,288.8 776.6,288.6 777.6,289.1 778.6,288.9 779.6,289.1 780.6,288.7 781.6,288.1 782.6,288.0 783.6,287.8 784.6,288.8 785.6,287.6 786.6,287.4 787.6,288.6 788.6,287.3 789.6,288.2 790.6,286.8 791.6,287.5 792.6,287.5 793.6,288.8 794.6,288.9 795.6,289.3 796.6,289.5 797.6,289.3 798.6,288.2 799.6,288.3 800.6,287.7 801.6,286.9 802.6,288.0 803.6,287.9 804.6,288.4 805.6,287.8 806.6,288.5 807.6,288.6 808.6,289.4 809.6,288.9 810.6,289.6 811.6,290.2 812.6,290.0 813.6,290.9 814.6,291.4 815.6,291.2 816.6,291.7 817.6,291.8 818.6,291.5 819.6,292.0 820.6,293.1 821.6,292.2 822.6,291.3 823.6,289.3 824.6,288.4 825.6,288.5 826.6,289.7 827.6,289.6 828.6,290.0 829.6,290.5 830.6,290.2 831.6,291.0 832.6,290.7 833.6,290.7 834.6,291.6 835.6,291.7 836.6,292.0 837.6,291.5 838.6,292.0 839.6,291.8 840.6,292.9 841.6,293.0 842.6,292.3 843.6,292.3 844.6,290.4 845.6,289.5 846.6,290.4 847.6,289.8 848.6,290.1 849.6,290.3 850.6,289.4 851.6,290.4 852.6,289.7 853.6,289.8 854.6,289.6 855.6,290.2 856.6,290.1 857.6,289.4 858.6,289.0 859.6,289.2 860.6,289.3 861.6,288.8 862.6,288.8 863.6,289.7 864.6,289.6 865.6,290.0 866.6,290.0 867.6,289.8 868.6,289.1 869.6,289.2 870.6,289.9 871.6,290.6 872.6,291.2 873.6,291.2 874.6,290.7 875.6,291.2 876.6,290.2 877.6,290.3 878.6,290.7 879.6,290.4 880.6,289.5 881.6,289.3 882.6,290.0 883.6,288.7 884.6,288.8 885.6,289.1 886.6,288.9 887.6,288.1 888.6,287.7 889.6,287.7 890.6,288.8 891.6,288.6 892.6,289.6 893.6,289.5 894.6,289.9 895.6,288.4 896.6,288.4 897.6,287.9 898.6,288.3 899.6,288.0 900.6,287.6 901.6,288.4 902.6,287.9 903.6,288.4 904.6,288.2 905.6,288.6 906.6,287.7 907.6,287.1 908.6,287.2 909.6,288.5 910.6,289.6 911.6,289.9 912.6,290.1 913.6,289.8 914.6,288.9 915.6,288.6 916.6,289.4 917.6,289.4 918.6,288.9 919.6,289.3 920.6,288.9 921.6,288.4 922.6,288.1 923.6,287.7 924.6,288.5 925.6,288.7 926.6,288.4 927.6,287.5 928.6,287.5 929.6,287.6 930.6,287.2 931.6,286.9 932.6,286.6 933.6,286.8 934.6,286.3 935.6,286.2 936.6,286.7 937.6,286.9 938.6,286.0 939.6,285.3 940.6,284.2 941.6,283.4 942.6,282.6 943.6,280.6 944.6,279.9 945.6,277.2 946.6,276.6 947.6,276.6 948.6,276.7 949.6,278.2 950.6,280.7 951.6,283.6 952.6,283.5 953.6,283.1 954.6,283.7 955.6,283.3 956.6,282.9 957.6,279.9 958.6,277.8 959.6,277.6 960.6,275.9 961.6,276.4 962.6,275.7 963.6,275.7 964.6,276.4 965.6,276.7 965.6,333.9"/></clipPath>
<g clip-path="url(#cg)"><rect x="58" y="249.0" width="1" height="84.9" fill="#f3b31b"/><rect x="59" y="249.0" width="1" height="84.9" fill="#f6b61e"/><rect x="60" y="249.0" width="1" height="84.9" fill="#f7b71f"/><rect x="61" y="249.0" width="1" height="84.9" fill="#a27f1a"/><rect x="62" y="249.0" width="1" height="84.9" fill="#edba1d"/><rect x="63" y="249.0" width="1" height="84.9" fill="#eeba1e"/><rect x="64" y="249.0" width="1" height="84.9" fill="#efbb1f"/><rect x="65" y="249.0" width="1" height="84.9" fill="#efbc1f"/><rect x="66" y="249.0" width="2" height="84.9" fill="#37cacb"/><rect x="68" y="249.0" width="1" height="84.9" fill="#c2ca2e"/><rect x="69" y="249.0" width="1" height="84.9" fill="#c1ca2d"/><rect x="70" y="249.0" width="1" height="84.9" fill="#c0c82c"/><rect x="71" y="249.0" width="1" height="84.9" fill="#c0c92c"/><rect x="72" y="249.0" width="1" height="84.9" fill="#3d9131"/><rect x="73" y="249.0" width="2" height="84.9" fill="#3a8e2e"/><rect x="75" y="249.0" width="1" height="84.9" fill="#dfa32b"/><rect x="76" y="249.0" width="1" height="84.9" fill="#e1a52d"/><rect x="77" y="249.0" width="1" height="84.9" fill="#41b281"/><rect x="78" y="249.0" width="1" height="84.9" fill="#43b383"/><rect x="79" y="249.0" width="1" height="84.9" fill="#d2ca34"/><rect x="80" y="249.0" width="1" height="84.9" fill="#bec93a"/><rect x="81" y="249.0" width="1" height="84.9" fill="#afc73b"/><rect x="82" y="249.0" width="1" height="84.9" fill="#b0c73c"/><rect x="83" y="249.0" width="1" height="84.9" fill="#37b6a7"/><rect x="84" y="249.0" width="1" height="84.9" fill="#38b6a8"/><rect x="85" y="249.0" width="1" height="84.9" fill="#36b5a6"/><rect x="86" y="249.0" width="1" height="84.9" fill="#52a642"/><rect x="87" y="249.0" width="2" height="84.9" fill="#4fa33f"/><rect x="89" y="249.0" width="1" height="84.9" fill="#fdb61e"/><rect x="90" y="249.0" width="1" height="84.9" fill="#fab219"/><rect x="91" y="249.0" width="1" height="84.9" fill="#fab017"/><rect x="92" y="249.0" width="1" height="84.9" fill="#fabe1b"/><rect x="93" y="249.0" width="1" height="84.9" fill="#f8d11c"/><rect x="94" y="249.0" width="1" height="84.9" fill="#fbd61c"/><rect x="95" y="249.0" width="1" height="84.9" fill="#ffd61c"/><rect x="96" y="249.0" width="1" height="84.9" fill="#fbda1c"/><rect x="97" y="249.0" width="1" height="84.9" fill="#f4de1c"/><rect x="98" y="249.0" width="1" height="84.9" fill="#f4dc1c"/><rect x="99" y="249.0" width="1" height="84.9" fill="#fbda1c"/><rect x="100" y="249.0" width="1" height="84.9" fill="#ffd91c"/><rect x="101" y="249.0" width="2" height="84.9" fill="#ffd41c"/><rect x="103" y="249.0" width="1" height="84.9" fill="#ffd81c"/><rect x="104" y="249.0" width="1" height="84.9" fill="#ffd61c"/><rect x="105" y="249.0" width="1" height="84.9" fill="#ffd21c"/><rect x="106" y="249.0" width="1" height="84.9" fill="#ffd61c"/><rect x="107" y="249.0" width="2" height="84.9" fill="#ffe01c"/><rect x="109" y="249.0" width="1" height="84.9" fill="#ffd61c"/><rect x="110" y="249.0" width="1" height="84.9" fill="#ffd51c"/><rect x="111" y="249.0" width="1" height="84.9" fill="#ffdf1c"/><rect x="112" y="249.0" width="1" height="84.9" fill="#ffdd1c"/><rect x="113" y="249.0" width="1" height="84.9" fill="#ffcf1c"/><rect x="114" y="249.0" width="1" height="84.9" fill="#ffcc1c"/><rect x="115" y="249.0" width="1" height="84.9" fill="#ffd81c"/><rect x="116" y="249.0" width="1" height="84.9" fill="#ffdb1c"/><rect x="117" y="249.0" width="1" height="84.9" fill="#ffd01c"/><rect x="118" y="249.0" width="1" height="84.9" fill="#ffc81c"/><rect x="119" y="249.0" width="1" height="84.9" fill="#ffd01c"/><rect x="120" y="249.0" width="1" height="84.9" fill="#ffde1c"/><rect x="121" y="249.0" width="2" height="84.9" fill="#ffe61c"/><rect x="123" y="249.0" width="1" height="84.9" fill="#fbe41c"/><rect x="124" y="249.0" width="2" height="84.9" fill="#f4e11c"/><rect x="126" y="249.0" width="1" height="84.9" fill="#fbe31c"/><rect x="127" y="249.0" width="3" height="84.9" fill="#ffe41c"/><rect x="130" y="249.0" width="1" height="84.9" fill="#ffe01c"/><rect x="131" y="249.0" width="1" height="84.9" fill="#ffd61c"/><rect x="132" y="249.0" width="1" height="84.9" fill="#ffd21c"/><rect x="133" y="249.0" width="1" height="84.9" fill="#ffd61c"/><rect x="134" y="249.0" width="1" height="84.9" fill="#ffda1c"/><rect x="135" y="249.0" width="2" height="84.9" fill="#ffe01c"/><rect x="137" y="249.0" width="1" height="84.9" fill="#ffda1c"/><rect x="138" y="249.0" width="1" height="84.9" fill="#ffd41c"/><rect x="139" y="249.0" width="1" height="84.9" fill="#ffcc1c"/><rect x="140" y="249.0" width="1" height="84.9" fill="#ffd01c"/><rect x="141" y="249.0" width="1" height="84.9" fill="#ffde1c"/><rect x="142" y="249.0" width="1" height="84.9" fill="#ffe21c"/><rect x="143" y="249.0" width="2" height="84.9" fill="#ffdc1c"/><rect x="145" y="249.0" width="1" height="84.9" fill="#ffe21c"/><rect x="146" y="249.0" width="3" height="84.9" fill="#ffe61c"/><rect x="149" y="249.0" width="1" height="84.9" fill="#ffde1c"/><rect x="150" y="249.0" width="2" height="84.9" fill="#ffd21c"/><rect x="152" y="249.0" width="1" height="84.9" fill="#ffde1c"/><rect x="153" y="249.0" width="1" height="84.9" fill="#ffdc1c"/><rect x="154" y="249.0" width="1" height="84.9" fill="#ffce1c"/><rect x="155" y="249.0" width="3" height="84.9" fill="#ffc81c"/><rect x="158" y="249.0" width="1" height="84.9" fill="#ffd01c"/><rect x="159" y="249.0" width="1" height="84.9" fill="#ffde1c"/><rect x="160" y="249.0" width="1" height="84.9" fill="#ffe01c"/><rect x="161" y="249.0" width="1" height="84.9" fill="#ffd61c"/><rect x="162" y="249.0" width="1" height="84.9" fill="#ffce1c"/><rect x="163" y="249.0" width="1" height="84.9" fill="#ffca1c"/><rect x="164" y="249.0" width="1" height="84.9" fill="#ffd01c"/><rect x="165" y="249.0" width="1" height="84.9" fill="#ffde1c"/><rect x="166" y="249.0" width="2" height="84.9" fill="#ffe61c"/><rect x="168" y="249.0" width="1" height="84.9" fill="#ffe51c"/><rect x="169" y="249.0" width="2" height="84.9" fill="#ffe61c"/><rect x="171" y="249.0" width="1" height="84.9" fill="#ffe01c"/><rect x="172" y="249.0" width="1" height="84.9" fill="#ffd61c"/><rect x="173" y="249.0" width="1" height="84.9" fill="#ffd51c"/><rect x="174" y="249.0" width="1" height="84.9" fill="#ffdf1c"/><rect x="175" y="249.0" width="2" height="84.9" fill="#ffe41c"/><rect x="177" y="249.0" width="1" height="84.9" fill="#fbe31c"/><rect x="178" y="249.0" width="1" height="84.9" fill="#f4e11c"/><rect x="179" y="249.0" width="1" height="84.9" fill="#f4de1c"/><rect x="180" y="249.0" width="1" height="84.9" fill="#fbda1c"/><rect x="181" y="249.0" width="1" height="84.9" fill="#ffd81c"/><rect x="182" y="249.0" width="1" height="84.9" fill="#ffdb1c"/><rect x="183" y="249.0" width="1" height="84.9" fill="#ffe11c"/><rect x="184" y="249.0" width="2" height="84.9" fill="#ffe41c"/><rect x="186" y="249.0" width="1" height="84.9" fill="#ffdc1c"/><rect x="187" y="249.0" width="1" height="84.9" fill="#ffce1c"/><rect x="188" y="249.0" width="1" height="84.9" fill="#fbce1c"/><rect x="189" y="249.0" width="1" height="84.9" fill="#f4da1c"/><rect x="190" y="249.0" width="1" height="84.9" fill="#f4e11c"/><rect x="191" y="249.0" width="1" height="84.9" fill="#fae31c"/><rect x="192" y="249.0" width="1" height="84.9" fill="#bfd41b"/><rect x="193" y="249.0" width="1" height="84.9" fill="#c2d61e"/><rect x="194" y="249.0" width="1" height="84.9" fill="#c4d820"/><rect x="195" y="249.0" width="1" height="84.9" fill="#c2d61e"/><rect x="196" y="249.0" width="1" height="84.9" fill="#bed41a"/><rect x="197" y="249.0" width="1" height="84.9" fill="#bdd319"/><rect x="198" y="249.0" width="1" height="84.9" fill="#f8e21c"/><rect x="199" y="249.0" width="1" height="84.9" fill="#f9e21d"/><rect x="200" y="249.0" width="1" height="84.9" fill="#fce520"/><rect x="201" y="249.0" width="1" height="84.9" fill="#fee622"/><rect x="202" y="249.0" width="1" height="84.9" fill="#fc9224"/><rect x="203" y="249.0" width="1" height="84.9" fill="#f78e1f"/><rect x="204" y="249.0" width="1" height="84.9" fill="#f38c1b"/><rect x="205" y="249.0" width="1" height="84.9" fill="#f28b1a"/><rect x="206" y="249.0" width="2" height="84.9" fill="#ff4d21"/><rect x="208" y="249.0" width="1" height="84.9" fill="#fe4b1f"/><rect x="209" y="249.0" width="1" height="84.9" fill="#fc4a1e"/><rect x="210" y="249.0" width="1" height="84.9" fill="#fe4b1f"/><rect x="211" y="249.0" width="1" height="84.9" fill="#ff4d21"/><rect x="212" y="249.0" width="1" height="84.9" fill="#ff4e22"/><rect x="213" y="249.0" width="1" height="84.9" fill="#ff4f23"/><rect x="214" y="249.0" width="1" height="84.9" fill="#ff4f24"/><rect x="215" y="249.0" width="1" height="84.9" fill="#fe4d21"/><rect x="216" y="249.0" width="1" height="84.9" fill="#fc4c1f"/><rect x="217" y="249.0" width="1" height="84.9" fill="#fd4c20"/><rect x="218" y="249.0" width="1" height="84.9" fill="#fe4c20"/><rect x="219" y="249.0" width="1" height="84.9" fill="#fe4c1f"/><rect x="220" y="249.0" width="2" height="84.9" fill="#fe4c20"/><rect x="222" y="249.0" width="1" height="84.9" fill="#fc4a1e"/><rect x="223" y="249.0" width="2" height="84.9" fill="#fb491c"/><rect x="225" y="249.0" width="1" height="84.9" fill="#fc4a1e"/><rect x="226" y="249.0" width="1" height="84.9" fill="#fe4d22"/><rect x="227" y="249.0" width="1" height="84.9" fill="#fe4d21"/><rect x="228" y="249.0" width="1" height="84.9" fill="#fe4b1f"/><rect x="229" y="249.0" width="1" height="84.9" fill="#fe4e21"/><rect x="230" y="249.0" width="1" height="84.9" fill="#ff5223"/><rect x="231" y="249.0" width="1" height="84.9" fill="#fe5121"/><rect x="232" y="249.0" width="1" height="84.9" fill="#fd4f1f"/><rect x="233" y="249.0" width="1" height="84.9" fill="#fe5122"/><rect x="234" y="249.0" width="1" height="84.9" fill="#ff5d24"/><rect x="235" y="249.0" width="1" height="84.9" fill="#fe7022"/><rect x="236" y="249.0" width="1" height="84.9" fill="#fc771f"/><rect x="237" y="249.0" width="1" height="84.9" fill="#fe7820"/><rect x="238" y="249.0" width="1" height="84.9" fill="#ff7b23"/><rect x="239" y="249.0" width="1" height="84.9" fill="#f9e021"/><rect x="240" y="249.0" width="1" height="84.9" fill="#f7de1f"/><rect x="241" y="249.0" width="1" height="84.9" fill="#ead91b"/><rect x="242" y="249.0" width="1" height="84.9" fill="#d9d61b"/><rect x="243" y="249.0" width="1" height="84.9" fill="#d2d51c"/><rect x="244" y="249.0" width="1" height="84.9" fill="#d4d71e"/><rect x="245" y="249.0" width="1" height="84.9" fill="#d9da23"/><rect x="246" y="249.0" width="1" height="84.9" fill="#dadb24"/><rect x="247" y="249.0" width="1" height="84.9" fill="#d9da23"/><rect x="248" y="249.0" width="2" height="84.9" fill="#d8da22"/><rect x="250" y="249.0" width="1" height="84.9" fill="#d6d820"/><rect x="251" y="249.0" width="1" height="84.9" fill="#ddd81e"/><rect x="252" y="249.0" width="1" height="84.9" fill="#f1dd20"/><rect x="253" y="249.0" width="1" height="84.9" fill="#f8de1e"/><rect x="254" y="249.0" width="1" height="84.9" fill="#f5da1a"/><rect x="255" y="249.0" width="1" height="84.9" fill="#f8d41a"/><rect x="256" y="249.0" width="2" height="84.9" fill="#fdcc1c"/><rect x="258" y="249.0" width="2" height="84.9" fill="#fcd01c"/><rect x="260" y="249.0" width="1" height="84.9" fill="#fccc1c"/><rect x="261" y="249.0" width="1" height="84.9" fill="#fcc81c"/><rect x="262" y="249.0" width="1" height="84.9" fill="#fad01c"/><rect x="263" y="249.0" width="2" height="84.9" fill="#f8d81c"/><rect x="265" y="249.0" width="1" height="84.9" fill="#fad01c"/><rect x="266" y="249.0" width="1" height="84.9" fill="#fdc21c"/><rect x="267" y="249.0" width="1" height="84.9" fill="#ffbe1c"/><rect x="268" y="249.0" width="1" height="84.9" fill="#ffc01c"/><rect x="269" y="249.0" width="2" height="84.9" fill="#b8d030"/><rect x="271" y="249.0" width="1" height="84.9" fill="#bad232"/><rect x="272" y="249.0" width="1" height="84.9" fill="#b9d131"/><rect x="273" y="249.0" width="1" height="84.9" fill="#b6ce2e"/><rect x="274" y="249.0" width="1" height="84.9" fill="#b7d02f"/><rect x="275" y="249.0" width="1" height="84.9" fill="#b9d131"/><rect x="276" y="249.0" width="1" height="84.9" fill="#b7cf2f"/><rect x="277" y="249.0" width="1" height="84.9" fill="#b6ce2e"/><rect x="278" y="249.0" width="1" height="84.9" fill="#f8d81c"/><rect x="279" y="249.0" width="1" height="84.9" fill="#fad21c"/><rect x="280" y="249.0" width="1" height="84.9" fill="#fccc1c"/><rect x="281" y="249.0" width="1" height="84.9" fill="#fad21c"/><rect x="282" y="249.0" width="1" height="84.9" fill="#f8d81c"/><rect x="283" y="249.0" width="1" height="84.9" fill="#41a243"/><rect x="284" y="249.0" width="1" height="84.9" fill="#3d9f3f"/><rect x="285" y="249.0" width="1" height="84.9" fill="#3b9e3d"/><rect x="286" y="249.0" width="1" height="84.9" fill="#3fa141"/><rect x="287" y="249.0" width="1" height="84.9" fill="#42a344"/><rect x="288" y="249.0" width="1" height="84.9" fill="#f2de22"/><rect x="289" y="249.0" width="1" height="84.9" fill="#3eaf5e"/><rect x="290" y="249.0" width="1" height="84.9" fill="#21c9d5"/><rect x="291" y="249.0" width="1" height="84.9" fill="#22cad6"/><rect x="292" y="249.0" width="1" height="84.9" fill="#20c8d4"/><rect x="293" y="249.0" width="1" height="84.9" fill="#1cc5d0"/><rect x="294" y="249.0" width="1" height="84.9" fill="#1bc4cf"/><rect x="295" y="249.0" width="1" height="84.9" fill="#4aab5a"/><rect x="296" y="249.0" width="1" height="84.9" fill="#ffe21c"/><rect x="297" y="249.0" width="1" height="84.9" fill="#fbe21c"/><rect x="298" y="249.0" width="1" height="84.9" fill="#f8de1c"/><rect x="299" y="249.0" width="1" height="84.9" fill="#fbde1c"/><rect x="300" y="249.0" width="1" height="84.9" fill="#ffe11c"/><rect x="301" y="249.0" width="1" height="84.9" fill="#7eb62e"/><rect x="302" y="249.0" width="1" height="84.9" fill="#80b830"/><rect x="303" y="249.0" width="1" height="84.9" fill="#81b831"/><rect x="304" y="249.0" width="1" height="84.9" fill="#80b830"/><rect x="305" y="249.0" width="3" height="84.9" fill="#ffc81c"/><rect x="308" y="249.0" width="1" height="84.9" fill="#1cb1a9"/><rect x="309" y="249.0" width="1" height="84.9" fill="#1cb6ba"/><rect x="310" y="249.0" width="1" height="84.9" fill="#1cb9c4"/><rect x="311" y="249.0" width="1" height="84.9" fill="#37a057"/><rect x="312" y="249.0" width="1" height="84.9" fill="#fae41c"/><rect x="313" y="249.0" width="1" height="84.9" fill="#f4e21c"/><rect x="314" y="249.0" width="1" height="84.9" fill="#f4e11c"/><rect x="315" y="249.0" width="1" height="84.9" fill="#fbdc1c"/><rect x="316" y="249.0" width="1" height="84.9" fill="#ffc71d"/><rect x="317" y="249.0" width="1" height="84.9" fill="#feae1d"/><rect x="318" y="249.0" width="1" height="84.9" fill="#fca41c"/><rect x="319" y="249.0" width="1" height="84.9" fill="#fda51d"/><rect x="320" y="249.0" width="1" height="84.9" fill="#fea41c"/><rect x="321" y="249.0" width="1" height="84.9" fill="#feaf1c"/><rect x="322" y="249.0" width="1" height="84.9" fill="#ffc51c"/><rect x="323" y="249.0" width="1" height="84.9" fill="#ffd61c"/><rect x="324" y="249.0" width="1" height="84.9" fill="#ffe01c"/><rect x="325" y="249.0" width="1" height="84.9" fill="#ffd71e"/><rect x="326" y="249.0" width="1" height="84.9" fill="#ffba22"/><rect x="327" y="249.0" width="3" height="84.9" fill="#ffab24"/><rect x="330" y="249.0" width="1" height="84.9" fill="#ffaa23"/><rect x="331" y="249.0" width="1" height="84.9" fill="#ffb520"/><rect x="332" y="249.0" width="1" height="84.9" fill="#ffcc1e"/><rect x="333" y="249.0" width="4" height="84.9" fill="#ffd81c"/><rect x="337" y="249.0" width="1" height="84.9" fill="#fbda1c"/><rect x="338" y="249.0" width="1" height="84.9" fill="#f4de1c"/><rect x="339" y="249.0" width="1" height="84.9" fill="#f0e01c"/><rect x="340" y="249.0" width="1" height="84.9" fill="#f4de1c"/><rect x="341" y="249.0" width="1" height="84.9" fill="#fbda1c"/><rect x="342" y="249.0" width="1" height="84.9" fill="#ffd41c"/><rect x="343" y="249.0" width="1" height="84.9" fill="#ffd01c"/><rect x="344" y="249.0" width="1" height="84.9" fill="#ffd21c"/><rect x="345" y="249.0" width="1" height="84.9" fill="#ffd81c"/><rect x="346" y="249.0" width="1" height="84.9" fill="#ffd41d"/><rect x="347" y="249.0" width="1" height="84.9" fill="#ffc01f"/><rect x="348" y="249.0" width="1" height="84.9" fill="#ffb21f"/><rect x="349" y="249.0" width="1" height="84.9" fill="#feb11d"/><rect x="350" y="249.0" width="1" height="84.9" fill="#feaf1b"/><rect x="351" y="249.0" width="1" height="84.9" fill="#fabb1a"/><rect x="352" y="249.0" width="1" height="84.9" fill="#f3d41c"/><rect x="353" y="249.0" width="1" height="84.9" fill="#f0e01c"/><rect x="354" y="249.0" width="1" height="84.9" fill="#f4e11c"/><rect x="355" y="249.0" width="1" height="84.9" fill="#fbe31c"/><rect x="356" y="249.0" width="1" height="84.9" fill="#ffdf1c"/><rect x="357" y="249.0" width="1" height="84.9" fill="#ffd51c"/><rect x="358" y="249.0" width="1" height="84.9" fill="#ffce1c"/><rect x="359" y="249.0" width="1" height="84.9" fill="#ffca1c"/><rect x="360" y="249.0" width="1" height="84.9" fill="#ffc81c"/><rect x="361" y="249.0" width="1" height="84.9" fill="#ffcc1c"/><rect x="362" y="249.0" width="1" height="84.9" fill="#ffd41c"/><rect x="363" y="249.0" width="1" height="84.9" fill="#fbda1c"/><rect x="364" y="249.0" width="1" height="84.9" fill="#f4de1c"/><rect x="365" y="249.0" width="4" height="84.9" fill="#f0e01c"/><rect x="369" y="249.0" width="1" height="84.9" fill="#f4e21c"/><rect x="370" y="249.0" width="1" height="84.9" fill="#fbd41c"/><rect x="371" y="249.0" width="1" height="84.9" fill="#ffb51d"/><rect x="372" y="249.0" width="1" height="84.9" fill="#fea41c"/><rect x="373" y="249.0" width="1" height="84.9" fill="#fda31b"/><rect x="374" y="249.0" width="1" height="84.9" fill="#fea61e"/><rect x="375" y="249.0" width="1" height="84.9" fill="#ffa61f"/><rect x="376" y="249.0" width="1" height="84.9" fill="#fea41c"/><rect x="377" y="249.0" width="1" height="84.9" fill="#fca119"/><rect x="378" y="249.0" width="1" height="84.9" fill="#eedb1e"/><rect x="379" y="249.0" width="1" height="84.9" fill="#ecd91c"/><rect x="380" y="249.0" width="1" height="84.9" fill="#3ca544"/><rect x="381" y="249.0" width="1" height="84.9" fill="#3ea646"/><rect x="382" y="249.0" width="1" height="84.9" fill="#1cc4d4"/><rect x="383" y="249.0" width="3" height="84.9" fill="#1ec6d6"/><rect x="386" y="249.0" width="1" height="84.9" fill="#1fc8d7"/><rect x="387" y="249.0" width="1" height="84.9" fill="#35a64d"/><rect x="388" y="249.0" width="1" height="84.9" fill="#38a850"/><rect x="389" y="249.0" width="1" height="84.9" fill="#fbda23"/><rect x="390" y="249.0" width="1" height="84.9" fill="#f9d921"/><rect x="391" y="249.0" width="1" height="84.9" fill="#ea9b1a"/><rect x="392" y="249.0" width="1" height="84.9" fill="#6fa82f"/><rect x="393" y="249.0" width="1" height="84.9" fill="#70a930"/><rect x="394" y="249.0" width="1" height="84.9" fill="#71a931"/><rect x="395" y="249.0" width="1" height="84.9" fill="#70a830"/><rect x="396" y="249.0" width="1" height="84.9" fill="#72a932"/><rect x="397" y="249.0" width="1" height="84.9" fill="#ffdf1c"/><rect x="398" y="249.0" width="1" height="84.9" fill="#fbdc1c"/><rect x="399" y="249.0" width="1" height="84.9" fill="#f5dd1c"/><rect x="400" y="249.0" width="1" height="84.9" fill="#26c9de"/><rect x="401" y="249.0" width="1" height="84.9" fill="#23c7db"/><rect x="402" y="249.0" width="1" height="84.9" fill="#20c4d8"/><rect x="403" y="249.0" width="2" height="84.9" fill="#22c6da"/><rect x="405" y="249.0" width="1" height="84.9" fill="#1ec2d6"/><rect x="406" y="249.0" width="1" height="84.9" fill="#1dc1d5"/><rect x="407" y="249.0" width="1" height="84.9" fill="#64b364"/><rect x="408" y="249.0" width="1" height="84.9" fill="#ffd81c"/><rect x="409" y="249.0" width="1" height="84.9" fill="#ffda1c"/><rect x="410" y="249.0" width="1" height="84.9" fill="#ffe01c"/><rect x="411" y="249.0" width="1" height="84.9" fill="#ffe21c"/><rect x="412" y="249.0" width="1" height="84.9" fill="#ffe41c"/><rect x="413" y="249.0" width="1" height="84.9" fill="#ffe11c"/><rect x="414" y="249.0" width="1" height="84.9" fill="#ffdb1c"/><rect x="415" y="249.0" width="1" height="84.9" fill="#ffda1c"/><rect x="416" y="249.0" width="1" height="84.9" fill="#ffdf1c"/><rect x="417" y="249.0" width="1" height="84.9" fill="#a4c52c"/><rect x="418" y="249.0" width="1" height="84.9" fill="#a6c62e"/><rect x="419" y="249.0" width="1" height="84.9" fill="#a6c72e"/><rect x="420" y="249.0" width="1" height="84.9" fill="#a5c62d"/><rect x="421" y="249.0" width="2" height="84.9" fill="#a3c42b"/><rect x="423" y="249.0" width="1" height="84.9" fill="#a6c62e"/><rect x="424" y="249.0" width="1" height="84.9" fill="#aaca32"/><rect x="425" y="249.0" width="1" height="84.9" fill="#ffd01c"/><rect x="426" y="249.0" width="1" height="84.9" fill="#fbd41c"/><rect x="427" y="249.0" width="1" height="84.9" fill="#f5db1c"/><rect x="428" y="249.0" width="1" height="84.9" fill="#3ea54a"/><rect x="429" y="249.0" width="1" height="84.9" fill="#3aa54a"/><rect x="430" y="249.0" width="1" height="84.9" fill="#33a64e"/><rect x="431" y="249.0" width="1" height="84.9" fill="#2fa74f"/><rect x="432" y="249.0" width="1" height="84.9" fill="#33aa53"/><rect x="433" y="249.0" width="1" height="84.9" fill="#34ab54"/><rect x="434" y="249.0" width="1" height="84.9" fill="#32a952"/><rect x="435" y="249.0" width="2" height="84.9" fill="#90bc30"/><rect x="437" y="249.0" width="1" height="84.9" fill="#95be2e"/><rect x="438" y="249.0" width="1" height="84.9" fill="#9dc12b"/><rect x="439" y="249.0" width="1" height="84.9" fill="#9ec12b"/><rect x="440" y="249.0" width="1" height="84.9" fill="#9cc02c"/><rect x="441" y="249.0" width="1" height="84.9" fill="#9ec12b"/><rect x="442" y="249.0" width="1" height="84.9" fill="#a2c329"/><rect x="443" y="249.0" width="2" height="84.9" fill="#a4c428"/><rect x="445" y="249.0" width="1" height="84.9" fill="#a2c329"/><rect x="446" y="249.0" width="1" height="84.9" fill="#9ec12b"/><rect x="447" y="249.0" width="1" height="84.9" fill="#9cc02c"/><rect x="448" y="249.0" width="2" height="84.9" fill="#1ea868"/><rect x="450" y="249.0" width="1" height="84.9" fill="#1ba462"/><rect x="451" y="249.0" width="2" height="84.9" fill="#159c56"/><rect x="453" y="249.0" width="1" height="84.9" fill="#1aa360"/><rect x="454" y="249.0" width="1" height="84.9" fill="#0f934b"/><rect x="455" y="249.0" width="1" height="84.9" fill="#11964e"/><rect x="456" y="249.0" width="1" height="84.9" fill="#129850"/><rect x="457" y="249.0" width="1" height="84.9" fill="#169d58"/><rect x="458" y="249.0" width="1" height="84.9" fill="#1da666"/><rect x="459" y="249.0" width="1" height="84.9" fill="#1fa96a"/><rect x="460" y="249.0" width="3" height="84.9" fill="#1ea868"/><rect x="463" y="249.0" width="1" height="84.9" fill="#1fa96a"/><rect x="464" y="249.0" width="1" height="84.9" fill="#21ab6e"/><rect x="465" y="249.0" width="5" height="84.9" fill="#22ac70"/><rect x="470" y="249.0" width="1" height="84.9" fill="#1ea768"/><rect x="471" y="249.0" width="1" height="84.9" fill="#19a15e"/><rect x="472" y="249.0" width="1" height="84.9" fill="#1ba462"/><rect x="473" y="249.0" width="1" height="84.9" fill="#1ea868"/><rect x="474" y="249.0" width="1" height="84.9" fill="#1fa96a"/><rect x="475" y="249.0" width="1" height="84.9" fill="#21ab6d"/><rect x="476" y="249.0" width="1" height="84.9" fill="#afc72f"/><rect x="477" y="249.0" width="1" height="84.9" fill="#aec62e"/><rect x="478" y="249.0" width="1" height="84.9" fill="#139b58"/><rect x="479" y="249.0" width="1" height="84.9" fill="#129852"/><rect x="480" y="249.0" width="1" height="84.9" fill="#159c56"/><rect x="481" y="249.0" width="1" height="84.9" fill="#16a05e"/><rect x="482" y="249.0" width="2" height="84.9" fill="#16a060"/><rect x="484" y="249.0" width="1" height="84.9" fill="#18a262"/><rect x="485" y="249.0" width="2" height="84.9" fill="#1ca666"/><rect x="487" y="249.0" width="1" height="84.9" fill="#18a262"/><rect x="488" y="249.0" width="1" height="84.9" fill="#16a060"/><rect x="489" y="249.0" width="1" height="84.9" fill="#18a262"/><rect x="490" y="249.0" width="1" height="84.9" fill="#1ca666"/><rect x="491" y="249.0" width="1" height="84.9" fill="#1ea868"/><rect x="492" y="249.0" width="1" height="84.9" fill="#1ba462"/><rect x="493" y="249.0" width="1" height="84.9" fill="#159c56"/><rect x="494" y="249.0" width="1" height="84.9" fill="#149a52"/><rect x="495" y="249.0" width="1" height="84.9" fill="#169e56"/><rect x="496" y="249.0" width="1" height="84.9" fill="#18a058"/><rect x="497" y="249.0" width="1" height="84.9" fill="#169e56"/><rect x="498" y="249.0" width="2" height="84.9" fill="#149a52"/><rect x="500" y="249.0" width="2" height="84.9" fill="#169e56"/><rect x="502" y="249.0" width="1" height="84.9" fill="#149c56"/><rect x="503" y="249.0" width="1" height="84.9" fill="#18a160"/><rect x="504" y="249.0" width="1" height="84.9" fill="#1ea86b"/><rect x="505" y="249.0" width="1" height="84.9" fill="#0e9048"/><rect x="506" y="249.0" width="1" height="84.9" fill="#9abf26"/><rect x="507" y="249.0" width="1" height="84.9" fill="#9cc128"/><rect x="508" y="249.0" width="1" height="84.9" fill="#a0c42c"/><rect x="509" y="249.0" width="1" height="84.9" fill="#c3936f"/><rect x="510" y="249.0" width="1" height="84.9" fill="#c79673"/><rect x="511" y="249.0" width="1" height="84.9" fill="#ca9876"/><rect x="512" y="249.0" width="2" height="84.9" fill="#a8c828"/><rect x="514" y="249.0" width="1" height="84.9" fill="#a5c629"/><rect x="515" y="249.0" width="1" height="84.9" fill="#9fc22b"/><rect x="516" y="249.0" width="1" height="84.9" fill="#9cc02c"/><rect x="517" y="249.0" width="1" height="84.9" fill="#9ec12b"/><rect x="518" y="249.0" width="1" height="84.9" fill="#a2c329"/><rect x="519" y="249.0" width="1" height="84.9" fill="#a4c428"/><rect x="520" y="249.0" width="1" height="84.9" fill="#abc727"/><rect x="521" y="249.0" width="1" height="84.9" fill="#b9cd25"/><rect x="522" y="249.0" width="2" height="84.9" fill="#c0d024"/><rect x="524" y="249.0" width="1" height="84.9" fill="#90bc30"/><rect x="525" y="249.0" width="1" height="84.9" fill="#c3983f"/><rect x="526" y="249.0" width="1" height="84.9" fill="#c79a43"/><rect x="527" y="249.0" width="1" height="84.9" fill="#a0c42b"/><rect x="528" y="249.0" width="1" height="84.9" fill="#98c02d"/><rect x="529" y="249.0" width="1" height="84.9" fill="#bccf25"/><rect x="530" y="249.0" width="1" height="84.9" fill="#b4cc27"/><rect x="531" y="249.0" width="1" height="84.9" fill="#abc928"/><rect x="532" y="249.0" width="2" height="84.9" fill="#a8c828"/><rect x="534" y="249.0" width="1" height="84.9" fill="#a2c52a"/><rect x="535" y="249.0" width="1" height="84.9" fill="#9fc32c"/><rect x="536" y="249.0" width="1" height="84.9" fill="#abc82a"/><rect x="537" y="249.0" width="2" height="84.9" fill="#b4cc28"/><rect x="539" y="249.0" width="2" height="84.9" fill="#239545"/><rect x="541" y="249.0" width="1" height="84.9" fill="#249646"/><rect x="542" y="249.0" width="1" height="84.9" fill="#239645"/><rect x="543" y="249.0" width="1" height="84.9" fill="#209242"/><rect x="544" y="249.0" width="1" height="84.9" fill="#1e9240"/><rect x="545" y="249.0" width="1" height="84.9" fill="#1e9140"/><rect x="546" y="249.0" width="1" height="84.9" fill="#209242"/><rect x="547" y="249.0" width="1" height="84.9" fill="#239545"/><rect x="548" y="249.0" width="1" height="84.9" fill="#acc828"/><rect x="549" y="249.0" width="1" height="84.9" fill="#aac728"/><rect x="550" y="249.0" width="1" height="84.9" fill="#a6c528"/><rect x="551" y="249.0" width="1" height="84.9" fill="#a4c428"/><rect x="552" y="249.0" width="1" height="84.9" fill="#a5c528"/><rect x="553" y="249.0" width="1" height="84.9" fill="#a7c728"/><rect x="554" y="249.0" width="1" height="84.9" fill="#a9c828"/><rect x="555" y="249.0" width="1" height="84.9" fill="#abc828"/><rect x="556" y="249.0" width="1" height="84.9" fill="#aac728"/><rect x="557" y="249.0" width="1" height="84.9" fill="#a6c528"/><rect x="558" y="249.0" width="1" height="84.9" fill="#a4c428"/><rect x="559" y="249.0" width="1" height="84.9" fill="#ddd519"/><rect x="560" y="249.0" width="1" height="84.9" fill="#ded71a"/><rect x="561" y="249.0" width="1" height="84.9" fill="#e0d81c"/><rect x="562" y="249.0" width="1" height="84.9" fill="#e2d91e"/><rect x="563" y="249.0" width="1" height="84.9" fill="#e1d81d"/><rect x="564" y="249.0" width="1" height="84.9" fill="#dfd71b"/><rect x="565" y="249.0" width="1" height="84.9" fill="#dfd81b"/><rect x="566" y="249.0" width="1" height="84.9" fill="#e5db1d"/><rect x="567" y="249.0" width="1" height="84.9" fill="#eddf1d"/><rect x="568" y="249.0" width="2" height="84.9" fill="#f0e01c"/><rect x="570" y="249.0" width="1" height="84.9" fill="#f4dc1c"/><rect x="571" y="249.0" width="1" height="84.9" fill="#fbd21c"/><rect x="572" y="249.0" width="1" height="84.9" fill="#ffce1c"/><rect x="573" y="249.0" width="1" height="84.9" fill="#fbd21c"/><rect x="574" y="249.0" width="1" height="84.9" fill="#f4dc1c"/><rect x="575" y="249.0" width="1" height="84.9" fill="#f4de1c"/><rect x="576" y="249.0" width="1" height="84.9" fill="#f2d91c"/><rect x="577" y="249.0" width="1" height="84.9" fill="#ecdb1d"/><rect x="578" y="249.0" width="1" height="84.9" fill="#f2e11d"/><rect x="579" y="249.0" width="1" height="84.9" fill="#bed52a"/><rect x="580" y="249.0" width="1" height="84.9" fill="#bdd429"/><rect x="581" y="249.0" width="1" height="84.9" fill="#f7d81c"/><rect x="582" y="249.0" width="1" height="84.9" fill="#f2d71c"/><rect x="583" y="249.0" width="1" height="84.9" fill="#f9d21c"/><rect x="584" y="249.0" width="1" height="84.9" fill="#ffd01c"/><rect x="585" y="249.0" width="1" height="84.9" fill="#ffd41c"/><rect x="586" y="249.0" width="1" height="84.9" fill="#f5d61c"/><rect x="587" y="249.0" width="1" height="84.9" fill="#e2d81e"/><rect x="588" y="249.0" width="1" height="84.9" fill="#e0da1e"/><rect x="589" y="249.0" width="1" height="84.9" fill="#f2e01c"/><rect x="590" y="249.0" width="2" height="84.9" fill="#fae21c"/><rect x="592" y="249.0" width="1" height="84.9" fill="#fcde1c"/><rect x="593" y="249.0" width="1" height="84.9" fill="#fad81c"/><rect x="594" y="249.0" width="1" height="84.9" fill="#f8d71c"/><rect x="595" y="249.0" width="1" height="84.9" fill="#fbd21c"/><rect x="596" y="249.0" width="1" height="84.9" fill="#ffce1c"/><rect x="597" y="249.0" width="1" height="84.9" fill="#fdd21c"/><rect x="598" y="249.0" width="1" height="84.9" fill="#f8dc1c"/><rect x="599" y="249.0" width="1" height="84.9" fill="#f6e01c"/><rect x="600" y="249.0" width="1" height="84.9" fill="#b6ce26"/><rect x="601" y="249.0" width="1" height="84.9" fill="#b3cb23"/><rect x="602" y="249.0" width="1" height="84.9" fill="#f9e31c"/><rect x="603" y="249.0" width="1" height="84.9" fill="#f7e11c"/><rect x="604" y="249.0" width="1" height="84.9" fill="#f6e01c"/><rect x="605" y="249.0" width="1" height="84.9" fill="#f8e21c"/><rect x="606" y="249.0" width="1" height="84.9" fill="#fde41c"/><rect x="607" y="249.0" width="1" height="84.9" fill="#ffe61c"/><rect x="608" y="249.0" width="1" height="84.9" fill="#fee61c"/><rect x="609" y="249.0" width="1" height="84.9" fill="#fde51c"/><rect x="610" y="249.0" width="1" height="84.9" fill="#fce41c"/><rect x="611" y="249.0" width="1" height="84.9" fill="#f8e21c"/><rect x="612" y="249.0" width="2" height="84.9" fill="#f6e01c"/><rect x="614" y="249.0" width="1" height="84.9" fill="#f2df1c"/><rect x="615" y="249.0" width="1" height="84.9" fill="#e6dc1c"/><rect x="616" y="249.0" width="1" height="84.9" fill="#e5d61d"/><rect x="617" y="249.0" width="1" height="84.9" fill="#f5d21c"/><rect x="618" y="249.0" width="1" height="84.9" fill="#ffd31c"/><rect x="619" y="249.0" width="1" height="84.9" fill="#b7cc1f"/><rect x="620" y="249.0" width="1" height="84.9" fill="#b9ce21"/><rect x="621" y="249.0" width="1" height="84.9" fill="#bed226"/><rect x="622" y="249.0" width="1" height="84.9" fill="#f6e01c"/><rect x="623" y="249.0" width="1" height="84.9" fill="#f7e01c"/><rect x="624" y="249.0" width="1" height="84.9" fill="#fae21c"/><rect x="625" y="249.0" width="1" height="84.9" fill="#fee11c"/><rect x="626" y="249.0" width="1" height="84.9" fill="#ffda1c"/><rect x="627" y="249.0" width="1" height="84.9" fill="#f9d81c"/><rect x="628" y="249.0" width="1" height="84.9" fill="#ecda1c"/><rect x="629" y="249.0" width="1" height="84.9" fill="#ecd81c"/><rect x="630" y="249.0" width="1" height="84.9" fill="#f9d21c"/><rect x="631" y="249.0" width="1" height="84.9" fill="#fed41c"/><rect x="632" y="249.0" width="1" height="84.9" fill="#fcde1c"/><rect x="633" y="249.0" width="1" height="84.9" fill="#f8e31c"/><rect x="634" y="249.0" width="2" height="84.9" fill="#f3e11c"/><rect x="636" y="249.0" width="1" height="84.9" fill="#f8e31c"/><rect x="637" y="249.0" width="1" height="84.9" fill="#f6e21c"/><rect x="638" y="249.0" width="1" height="84.9" fill="#ebde1c"/><rect x="639" y="249.0" width="1" height="84.9" fill="#e6dc1c"/><rect x="640" y="249.0" width="1" height="84.9" fill="#ecd11c"/><rect x="641" y="249.0" width="1" height="84.9" fill="#f5c71c"/><rect x="642" y="249.0" width="1" height="84.9" fill="#f4d41c"/><rect x="643" y="249.0" width="1" height="84.9" fill="#f0e01c"/><rect x="644" y="249.0" width="1" height="84.9" fill="#f3e11c"/><rect x="645" y="249.0" width="1" height="84.9" fill="#f8e31c"/><rect x="646" y="249.0" width="3" height="84.9" fill="#fbe41c"/><rect x="649" y="249.0" width="1" height="84.9" fill="#a4c428"/><rect x="650" y="249.0" width="1" height="84.9" fill="#f6e01c"/><rect x="651" y="249.0" width="1" height="84.9" fill="#a2c226"/><rect x="652" y="249.0" width="1" height="84.9" fill="#a1c225"/><rect x="653" y="249.0" width="1" height="84.9" fill="#a3c327"/><rect x="654" y="249.0" width="1" height="84.9" fill="#f6e01c"/><rect x="655" y="249.0" width="1" height="84.9" fill="#a5c529"/><rect x="656" y="249.0" width="1" height="84.9" fill="#a2c326"/><rect x="657" y="249.0" width="2" height="84.9" fill="#fbe41c"/><rect x="659" y="249.0" width="1" height="84.9" fill="#fce01c"/><rect x="660" y="249.0" width="2" height="84.9" fill="#feda1c"/><rect x="662" y="249.0" width="1" height="84.9" fill="#f7de1c"/><rect x="663" y="249.0" width="1" height="84.9" fill="#ebde1c"/><rect x="664" y="249.0" width="1" height="84.9" fill="#eadd1c"/><rect x="665" y="249.0" width="1" height="84.9" fill="#f2df1c"/><rect x="666" y="249.0" width="1" height="84.9" fill="#f8e21c"/><rect x="667" y="249.0" width="1" height="84.9" fill="#fde41c"/><rect x="668" y="249.0" width="1" height="84.9" fill="#f9e41c"/><rect x="669" y="249.0" width="1" height="84.9" fill="#ecde1c"/><rect x="670" y="249.0" width="1" height="84.9" fill="#e6dc1c"/><rect x="671" y="249.0" width="1" height="84.9" fill="#e8dd1c"/><rect x="672" y="249.0" width="1" height="84.9" fill="#eedf1c"/><rect x="673" y="249.0" width="1" height="84.9" fill="#f0e01c"/><rect x="674" y="249.0" width="1" height="84.9" fill="#f4e21c"/><rect x="675" y="249.0" width="1" height="84.9" fill="#fbe41c"/><rect x="676" y="249.0" width="1" height="84.9" fill="#ffe21c"/><rect x="677" y="249.0" width="1" height="84.9" fill="#fedd1c"/><rect x="678" y="249.0" width="1" height="84.9" fill="#fade1c"/><rect x="679" y="249.0" width="1" height="84.9" fill="#f8e11c"/><rect x="680" y="249.0" width="1" height="84.9" fill="#f9e21c"/><rect x="681" y="249.0" width="1" height="84.9" fill="#fae21c"/><rect x="682" y="249.0" width="1" height="84.9" fill="#f9e21c"/><rect x="683" y="249.0" width="1" height="84.9" fill="#f7e01c"/><rect x="684" y="249.0" width="1" height="84.9" fill="#f2df1c"/><rect x="685" y="249.0" width="1" height="84.9" fill="#f0da1c"/><rect x="686" y="249.0" width="1" height="84.9" fill="#f9d21c"/><rect x="687" y="249.0" width="1" height="84.9" fill="#fdd21c"/><rect x="688" y="249.0" width="1" height="84.9" fill="#f8dc1c"/><rect x="689" y="249.0" width="1" height="84.9" fill="#f7e11c"/><rect x="690" y="249.0" width="1" height="84.9" fill="#fae31c"/><rect x="691" y="249.0" width="1" height="84.9" fill="#fce01c"/><rect x="692" y="249.0" width="1" height="84.9" fill="#feda1c"/><rect x="693" y="249.0" width="1" height="84.9" fill="#ffd61c"/><rect x="694" y="249.0" width="1" height="84.9" fill="#b8cb24"/><rect x="695" y="249.0" width="2" height="84.9" fill="#bacd26"/><rect x="697" y="249.0" width="1" height="84.9" fill="#fdd51c"/><rect x="698" y="249.0" width="1" height="84.9" fill="#f3da1c"/><rect x="699" y="249.0" width="1" height="84.9" fill="#e0da1e"/><rect x="700" y="249.0" width="1" height="84.9" fill="#d8d81e"/><rect x="701" y="249.0" width="1" height="84.9" fill="#e1db1e"/><rect x="702" y="249.0" width="1" height="84.9" fill="#f2e11c"/><rect x="703" y="249.0" width="1" height="84.9" fill="#f6e21c"/><rect x="704" y="249.0" width="1" height="84.9" fill="#ebde1c"/><rect x="705" y="249.0" width="1" height="84.9" fill="#e6dc1c"/><rect x="706" y="249.0" width="1" height="84.9" fill="#ecde1c"/><rect x="707" y="249.0" width="1" height="84.9" fill="#f9e41c"/><rect x="708" y="249.0" width="1" height="84.9" fill="#f5e21c"/><rect x="709" y="249.0" width="2" height="84.9" fill="#e2dc1e"/><rect x="711" y="249.0" width="1" height="84.9" fill="#f5e21c"/><rect x="712" y="249.0" width="1" height="84.9" fill="#fee51c"/><rect x="713" y="249.0" width="1" height="84.9" fill="#fbe31c"/><rect x="714" y="249.0" width="1" height="84.9" fill="#fbdf1c"/><rect x="715" y="249.0" width="1" height="84.9" fill="#f8da1c"/><rect x="716" y="249.0" width="2" height="84.9" fill="#ecda1c"/><rect x="718" y="249.0" width="1" height="84.9" fill="#f9d81c"/><rect x="719" y="249.0" width="2" height="84.9" fill="#ffd61c"/><rect x="721" y="249.0" width="1" height="84.9" fill="#b0c920"/><rect x="722" y="249.0" width="1" height="84.9" fill="#b2cb22"/><rect x="723" y="249.0" width="1" height="84.9" fill="#b6ce26"/><rect x="724" y="249.0" width="1" height="84.9" fill="#b8cf28"/><rect x="725" y="249.0" width="1" height="84.9" fill="#ffe11c"/><rect x="726" y="249.0" width="1" height="84.9" fill="#ffda1c"/><rect x="727" y="249.0" width="1" height="84.9" fill="#f5d61c"/><rect x="728" y="249.0" width="1" height="84.9" fill="#e2d81e"/><rect x="729" y="249.0" width="1" height="84.9" fill="#d8d81e"/><rect x="730" y="249.0" width="1" height="84.9" fill="#acc524"/><rect x="731" y="249.0" width="1" height="84.9" fill="#adc525"/><rect x="732" y="249.0" width="1" height="84.9" fill="#afc727"/><rect x="733" y="249.0" width="1" height="84.9" fill="#b3ca2b"/><rect x="734" y="249.0" width="1" height="84.9" fill="#f6e01c"/><rect x="735" y="249.0" width="1" height="84.9" fill="#f8dc1c"/><rect x="736" y="249.0" width="1" height="84.9" fill="#fcd41c"/><rect x="737" y="249.0" width="1" height="84.9" fill="#aecc2e"/><rect x="738" y="249.0" width="1" height="84.9" fill="#accc2c"/><rect x="739" y="249.0" width="1" height="84.9" fill="#aaca2a"/><rect x="740" y="249.0" width="1" height="84.9" fill="#a7c827"/><rect x="741" y="249.0" width="1" height="84.9" fill="#a6c726"/><rect x="742" y="249.0" width="1" height="84.9" fill="#a8c828"/><rect x="743" y="249.0" width="1" height="84.9" fill="#f6e01c"/><rect x="744" y="249.0" width="1" height="84.9" fill="#f8de1c"/><rect x="745" y="249.0" width="1" height="84.9" fill="#fdd81c"/><rect x="746" y="249.0" width="1" height="84.9" fill="#fed91c"/><rect x="747" y="249.0" width="1" height="84.9" fill="#fce01c"/><rect x="748" y="249.0" width="1" height="84.9" fill="#fbe41c"/><rect x="749" y="249.0" width="1" height="84.9" fill="#fcde1c"/><rect x="750" y="249.0" width="1" height="84.9" fill="#f4d61c"/><rect x="751" y="249.0" width="1" height="84.9" fill="#e2d61e"/><rect x="752" y="249.0" width="1" height="84.9" fill="#e0da1e"/><rect x="753" y="249.0" width="1" height="84.9" fill="#f3e01c"/><rect x="754" y="249.0" width="1" height="84.9" fill="#fee51c"/><rect x="755" y="249.0" width="1" height="84.9" fill="#ffe01c"/><rect x="756" y="249.0" width="1" height="84.9" fill="#ffd61c"/><rect x="757" y="249.0" width="1" height="84.9" fill="#ffd31c"/><rect x="758" y="249.0" width="3" height="84.9" fill="#a6c62a"/><rect x="761" y="249.0" width="1" height="84.9" fill="#a8c72c"/><rect x="762" y="249.0" width="1" height="84.9" fill="#fcd91c"/><rect x="763" y="249.0" width="1" height="84.9" fill="#f8de1c"/><rect x="764" y="249.0" width="1" height="84.9" fill="#f6e01c"/><rect x="765" y="249.0" width="1" height="84.9" fill="#6baf2f"/><rect x="766" y="249.0" width="1" height="84.9" fill="#f0e01c"/><rect x="767" y="249.0" width="1" height="84.9" fill="#72b436"/><rect x="768" y="249.0" width="1" height="84.9" fill="#ffd61c"/><rect x="769" y="249.0" width="1" height="84.9" fill="#ffda1c"/><rect x="770" y="249.0" width="1" height="84.9" fill="#ffe21c"/><rect x="771" y="249.0" width="1" height="84.9" fill="#ffe01c"/><rect x="772" y="249.0" width="1" height="84.9" fill="#ffd41c"/><rect x="773" y="249.0" width="1" height="84.9" fill="#fed31c"/><rect x="774" y="249.0" width="1" height="84.9" fill="#fcd81c"/><rect x="775" y="249.0" width="1" height="84.9" fill="#fed31c"/><rect x="776" y="249.0" width="1" height="84.9" fill="#ffce1c"/><rect x="777" y="249.0" width="1" height="84.9" fill="#ffd41c"/><rect x="778" y="249.0" width="1" height="84.9" fill="#ffe01c"/><rect x="779" y="249.0" width="1" height="84.9" fill="#fee61c"/><rect x="780" y="249.0" width="1" height="84.9" fill="#fce51c"/><rect x="781" y="249.0" width="1" height="84.9" fill="#c5d425"/><rect x="782" y="249.0" width="1" height="84.9" fill="#d2d823"/><rect x="783" y="249.0" width="1" height="84.9" fill="#e6dc1f"/><rect x="784" y="249.0" width="1" height="84.9" fill="#bdcd1d"/><rect x="785" y="249.0" width="3" height="84.9" fill="#ffd61c"/><rect x="788" y="249.0" width="1" height="84.9" fill="#f9d81c"/><rect x="789" y="249.0" width="1" height="84.9" fill="#eeda1c"/><rect x="790" y="249.0" width="1" height="84.9" fill="#b7cf27"/><rect x="791" y="249.0" width="1" height="84.9" fill="#b5cd25"/><rect x="792" y="249.0" width="1" height="84.9" fill="#ffd61c"/><rect x="793" y="249.0" width="1" height="84.9" fill="#f5d61c"/><rect x="794" y="249.0" width="1" height="84.9" fill="#e5d81d"/><rect x="795" y="249.0" width="1" height="84.9" fill="#e2db1c"/><rect x="796" y="249.0" width="3" height="84.9" fill="#e6dc1c"/><rect x="799" y="249.0" width="1" height="84.9" fill="#ebde1c"/><rect x="800" y="249.0" width="1" height="84.9" fill="#f6e21c"/><rect x="801" y="249.0" width="1" height="84.9" fill="#fde51c"/><rect x="802" y="249.0" width="1" height="84.9" fill="#bed226"/><rect x="803" y="249.0" width="1" height="84.9" fill="#c0d328"/><rect x="804" y="249.0" width="1" height="84.9" fill="#cad625"/><rect x="805" y="249.0" width="1" height="84.9" fill="#d1d620"/><rect x="806" y="249.0" width="1" height="84.9" fill="#c4d120"/><rect x="807" y="249.0" width="1" height="84.9" fill="#bace22"/><rect x="808" y="249.0" width="1" height="84.9" fill="#f9e31c"/><rect x="809" y="249.0" width="1" height="84.9" fill="#f7e11c"/><rect x="810" y="249.0" width="1" height="84.9" fill="#f8dc1c"/><rect x="811" y="249.0" width="1" height="84.9" fill="#fdd21c"/><rect x="812" y="249.0" width="1" height="84.9" fill="#fbd21c"/><rect x="813" y="249.0" width="1" height="84.9" fill="#f8d91c"/><rect x="814" y="249.0" width="1" height="84.9" fill="#fbd81c"/><rect x="815" y="249.0" width="1" height="84.9" fill="#ffd41c"/><rect x="816" y="249.0" width="1" height="84.9" fill="#ffd01c"/><rect x="817" y="249.0" width="1" height="84.9" fill="#ffce1c"/><rect x="818" y="249.0" width="1" height="84.9" fill="#ffd01c"/><rect x="819" y="249.0" width="1" height="84.9" fill="#ffd41c"/><rect x="820" y="249.0" width="1" height="84.9" fill="#fed91c"/><rect x="821" y="249.0" width="1" height="84.9" fill="#fce01c"/><rect x="822" y="249.0" width="1" height="84.9" fill="#fce41c"/><rect x="823" y="249.0" width="2" height="84.9" fill="#f9e21c"/><rect x="825" y="249.0" width="1" height="84.9" fill="#fae21c"/><rect x="826" y="249.0" width="1" height="84.9" fill="#fbdf1c"/><rect x="827" y="249.0" width="1" height="84.9" fill="#f8da1c"/><rect x="828" y="249.0" width="1" height="84.9" fill="#ecda1c"/><rect x="829" y="249.0" width="1" height="84.9" fill="#ebde1c"/><rect x="830" y="249.0" width="1" height="84.9" fill="#f5e01c"/><rect x="831" y="249.0" width="1" height="84.9" fill="#f2e01c"/><rect x="832" y="249.0" width="1" height="84.9" fill="#e9dd1d"/><rect x="833" y="249.0" width="1" height="84.9" fill="#f2e01c"/><rect x="834" y="249.0" width="1" height="84.9" fill="#fbdf1c"/><rect x="835" y="249.0" width="1" height="84.9" fill="#fed91c"/><rect x="836" y="249.0" width="1" height="84.9" fill="#ffd41c"/><rect x="837" y="249.0" width="1" height="84.9" fill="#ffd01c"/><rect x="838" y="249.0" width="1" height="84.9" fill="#ffce1c"/><rect x="839" y="249.0" width="1" height="84.9" fill="#fed31c"/><rect x="840" y="249.0" width="1" height="84.9" fill="#f9dc1c"/><rect x="841" y="249.0" width="1" height="84.9" fill="#f2e01c"/><rect x="842" y="249.0" width="1" height="84.9" fill="#f4de1c"/><rect x="843" y="249.0" width="1" height="84.9" fill="#fbd81c"/><rect x="844" y="249.0" width="1" height="84.9" fill="#f9d81c"/><rect x="845" y="249.0" width="1" height="84.9" fill="#ecda1c"/><rect x="846" y="249.0" width="1" height="84.9" fill="#ebde1c"/><rect x="847" y="249.0" width="1" height="84.9" fill="#f5e01c"/><rect x="848" y="249.0" width="1" height="84.9" fill="#f9e21c"/><rect x="849" y="249.0" width="1" height="84.9" fill="#f7e01c"/><rect x="850" y="249.0" width="1" height="84.9" fill="#f8e21c"/><rect x="851" y="249.0" width="1" height="84.9" fill="#fde41c"/><rect x="852" y="249.0" width="1" height="84.9" fill="#ffe01c"/><rect x="853" y="249.0" width="1" height="84.9" fill="#fdd81c"/><rect x="854" y="249.0" width="1" height="84.9" fill="#f8dc1c"/><rect x="855" y="249.0" width="1" height="84.9" fill="#f6e01c"/><rect x="856" y="249.0" width="1" height="84.9" fill="#f2df1c"/><rect x="857" y="249.0" width="1" height="84.9" fill="#e6dc1c"/><rect x="858" y="249.0" width="1" height="84.9" fill="#dcd91e"/><rect x="859" y="249.0" width="1" height="84.9" fill="#e1db1e"/><rect x="860" y="249.0" width="1" height="84.9" fill="#f3de1c"/><rect x="861" y="249.0" width="1" height="84.9" fill="#fadc1c"/><rect x="862" y="249.0" width="1" height="84.9" fill="#f4de1c"/><rect x="863" y="249.0" width="1" height="84.9" fill="#f2e01c"/><rect x="864" y="249.0" width="1" height="84.9" fill="#f4e01c"/><rect x="865" y="249.0" width="1" height="84.9" fill="#f6e01c"/><rect x="866" y="249.0" width="1" height="84.9" fill="#f8e21c"/><rect x="867" y="249.0" width="1" height="84.9" fill="#fde41c"/><rect x="868" y="249.0" width="1" height="84.9" fill="#ffe61c"/><rect x="869" y="249.0" width="1" height="84.9" fill="#f9e41c"/><rect x="870" y="249.0" width="1" height="84.9" fill="#f2dd1c"/><rect x="871" y="249.0" width="1" height="84.9" fill="#f9d81c"/><rect x="872" y="249.0" width="1" height="84.9" fill="#f5d61c"/><rect x="873" y="249.0" width="1" height="84.9" fill="#e9da1d"/><rect x="874" y="249.0" width="1" height="84.9" fill="#eede1c"/><rect x="875" y="249.0" width="1" height="84.9" fill="#f6e01c"/><rect x="876" y="249.0" width="2" height="84.9" fill="#f4e01c"/><rect x="878" y="249.0" width="1" height="84.9" fill="#efdf1c"/><rect x="879" y="249.0" width="2" height="84.9" fill="#e9dd1d"/><rect x="881" y="249.0" width="1" height="84.9" fill="#e6dc1d"/><rect x="882" y="249.0" width="1" height="84.9" fill="#eade1c"/><rect x="883" y="249.0" width="1" height="84.9" fill="#f4de1c"/><rect x="884" y="249.0" width="1" height="84.9" fill="#fadc1c"/><rect x="885" y="249.0" width="1" height="84.9" fill="#fbdf1c"/><rect x="886" y="249.0" width="1" height="84.9" fill="#f2e01c"/><rect x="887" y="249.0" width="1" height="84.9" fill="#d8d81f"/><rect x="888" y="249.0" width="1" height="84.9" fill="#c3d022"/><rect x="889" y="249.0" width="1" height="84.9" fill="#ffe61c"/><rect x="890" y="249.0" width="1" height="84.9" fill="#ffe21c"/><rect x="891" y="249.0" width="2" height="84.9" fill="#ffda1c"/><rect x="893" y="249.0" width="1" height="84.9" fill="#ffe21c"/><rect x="894" y="249.0" width="1" height="84.9" fill="#ffe61c"/><rect x="895" y="249.0" width="1" height="84.9" fill="#fee61c"/><rect x="896" y="249.0" width="1" height="84.9" fill="#f7e21c"/><rect x="897" y="249.0" width="2" height="84.9" fill="#ebde1c"/><rect x="899" y="249.0" width="1" height="84.9" fill="#f5e01c"/><rect x="900" y="249.0" width="1" height="84.9" fill="#fae21c"/><rect x="901" y="249.0" width="1" height="84.9" fill="#abc62b"/><rect x="902" y="249.0" width="1" height="84.9" fill="#a8c428"/><rect x="903" y="249.0" width="1" height="84.9" fill="#a7c327"/><rect x="904" y="249.0" width="1" height="84.9" fill="#f1df1c"/><rect x="905" y="249.0" width="1" height="84.9" fill="#efdf1c"/><rect x="906" y="249.0" width="1" height="84.9" fill="#f4e11c"/><rect x="907" y="249.0" width="1" height="84.9" fill="#9dbe25"/><rect x="908" y="249.0" width="1" height="84.9" fill="#a0c028"/><rect x="909" y="249.0" width="1" height="84.9" fill="#e1db1d"/><rect x="910" y="249.0" width="1" height="84.9" fill="#dcd91e"/><rect x="911" y="249.0" width="1" height="84.9" fill="#e0da1e"/><rect x="912" y="249.0" width="1" height="84.9" fill="#f2e01c"/><rect x="913" y="249.0" width="1" height="84.9" fill="#fcde1c"/><rect x="914" y="249.0" width="1" height="84.9" fill="#f8d71c"/><rect x="915" y="249.0" width="1" height="84.9" fill="#ecd81c"/><rect x="916" y="249.0" width="1" height="84.9" fill="#e6dc1c"/><rect x="917" y="249.0" width="1" height="84.9" fill="#bdcd25"/><rect x="918" y="249.0" width="1" height="84.9" fill="#c5d124"/><rect x="919" y="249.0" width="1" height="84.9" fill="#c0cf27"/><rect x="920" y="249.0" width="1" height="84.9" fill="#ffd61c"/><rect x="921" y="249.0" width="1" height="84.9" fill="#ffd41c"/><rect x="922" y="249.0" width="1" height="84.9" fill="#ffd01c"/><rect x="923" y="249.0" width="2" height="84.9" fill="#ffce1c"/><rect x="925" y="249.0" width="1" height="84.9" fill="#f6d11c"/><rect x="926" y="249.0" width="1" height="84.9" fill="#e6d71e"/><rect x="927" y="249.0" width="1" height="84.9" fill="#deda1e"/><rect x="928" y="249.0" width="1" height="84.9" fill="#ddd91d"/><rect x="929" y="249.0" width="1" height="84.9" fill="#ded91e"/><rect x="930" y="249.0" width="1" height="84.9" fill="#ddd81d"/><rect x="931" y="249.0" width="1" height="84.9" fill="#dbd71b"/><rect x="932" y="249.0" width="1" height="84.9" fill="#d2d41c"/><rect x="933" y="249.0" width="1" height="84.9" fill="#c2d023"/><rect x="934" y="249.0" width="2" height="84.9" fill="#bccf28"/><rect x="936" y="249.0" width="1" height="84.9" fill="#bace26"/><rect x="937" y="249.0" width="1" height="84.9" fill="#b7cb23"/><rect x="938" y="249.0" width="1" height="84.9" fill="#abc522"/><rect x="939" y="249.0" width="1" height="84.9" fill="#98bc25"/><rect x="940" y="249.0" width="1" height="84.9" fill="#90b828"/><rect x="941" y="249.0" width="1" height="84.9" fill="#92ba2a"/><rect x="942" y="249.0" width="1" height="84.9" fill="#91b929"/><rect x="943" y="249.0" width="1" height="84.9" fill="#8db625"/><rect x="944" y="249.0" width="2" height="84.9" fill="#1ca568"/><rect x="946" y="249.0" width="1" height="84.9" fill="#18a264"/><rect x="947" y="249.0" width="1" height="84.9" fill="#149f60"/><rect x="948" y="249.0" width="3" height="84.9" fill="#139e5f"/><rect x="951" y="249.0" width="1" height="84.9" fill="#9dbc25"/><rect x="952" y="249.0" width="1" height="84.9" fill="#9bba23"/><rect x="953" y="249.0" width="1" height="84.9" fill="#9aba22"/><rect x="954" y="249.0" width="1" height="84.9" fill="#9cbb24"/><rect x="955" y="249.0" width="1" height="84.9" fill="#9cbc24"/><rect x="956" y="249.0" width="1" height="84.9" fill="#9bba23"/><rect x="957" y="249.0" width="2" height="84.9" fill="#1aa972"/><rect x="959" y="249.0" width="2" height="84.9" fill="#1aaa72"/><rect x="961" y="249.0" width="1" height="84.9" fill="#19a871"/><rect x="962" y="249.0" width="1" height="84.9" fill="#17a86f"/><rect x="963" y="249.0" width="1" height="84.9" fill="#18a870"/><rect x="964" y="249.0" width="1" height="84.9" fill="#19a971"/><rect x="965" y="249.0" width="1" height="84.9" fill="#1aaa72"/></g>
</g>
<g font-size="7" fill="#747474" text-anchor="end">
<text x="57.7" y="250.4">0</text><text x="57.7" y="230.1">50</text><text x="57.7" y="209.7">100</text><text x="57.7" y="189.4">150</text><text x="57.7" y="169.1">200</text><text x="57.7" y="336.2">0</text><text x="57.7" y="315.7">50</text><text x="57.7" y="295.2">100</text><text x="57.7" y="274.7">150</text><text x="57.7" y="254.2">200</text>
</g>
<g font-size="7.5" letter-spacing="0.18" fill="#747474" text-anchor="end">
<text transform="translate(66.2,341.0) rotate(-45)">12000.0</text><text transform="translate(239.2,341.0) rotate(-45)">14000.0</text><text transform="translate(412.1,341.0) rotate(-45)">16000.0</text><text transform="translate(585.0,341.0) rotate(-45)">18000.0</text><text transform="translate(757.9,341.0) rotate(-45)">20000.0</text><text transform="translate(930.8,341.0) rotate(-45)">22000.0</text>
</g>
<g font-size="8.45" fill="#747474" text-anchor="middle">
<text transform="translate(31.2,207.4) rotate(-90)">MSE [KSI]</text><text transform="translate(31.2,292.4) rotate(-90)">GR [api]</text><text x="512" y="375.8" font-size="9.2" letter-spacing="0.28">Depth [ft]</text>
</g>
</svg>

<div class="hr"></div>
<div class="mt" style="top:396.6px;left:315.8px;letter-spacing:0.33px">MSE Distribution</div>
<div class="mt" style="top:404.5px;left:319px;letter-spacing:0.375px">| 25th percentile: 48 | Median: 59 | 75th percentile: 68</div>
<div class="mt" style="top:412.6px;left:317.2px;letter-spacing:0.38px">Standard Deviation: 14</div>
<div class="box"></div>
<div class="yt" style="top:418.8px">1.0</div><div class="tick" style="top:422px"></div>
<div class="yt" style="top:462.4px">0.8</div><div class="tick" style="top:465px"></div>
<div class="yt" style="top:506.5px">0.6</div><div class="tick" style="top:509px"></div>
<svg class="cursor" width="17" height="18" viewBox="0 0 17 18"><path d="M6.8 1.5Q6.8 0.5 8 0.5Q9.2 0.5 9.2 1.5V6.3Q10.6 5.7 11.2 6.9Q12.6 6.3 13.1 7.7Q14.6 7.3 14.8 9V11.5Q14.8 13.8 13.2 15.8H7.2Q5 13.5 2.6 11Q1.2 9.4 2.6 8.6Q4.2 8 6.8 10.4Z" fill="#fff" stroke="#6a6a6a" stroke-width="0.9" stroke-linejoin="round"/><path d="M9.2 6.5V9M11.2 7.2V9.2M13.1 8V9.6" stroke="#9a9a9a" stroke-width="0.6" fill="none"/></svg>
</body></html>
